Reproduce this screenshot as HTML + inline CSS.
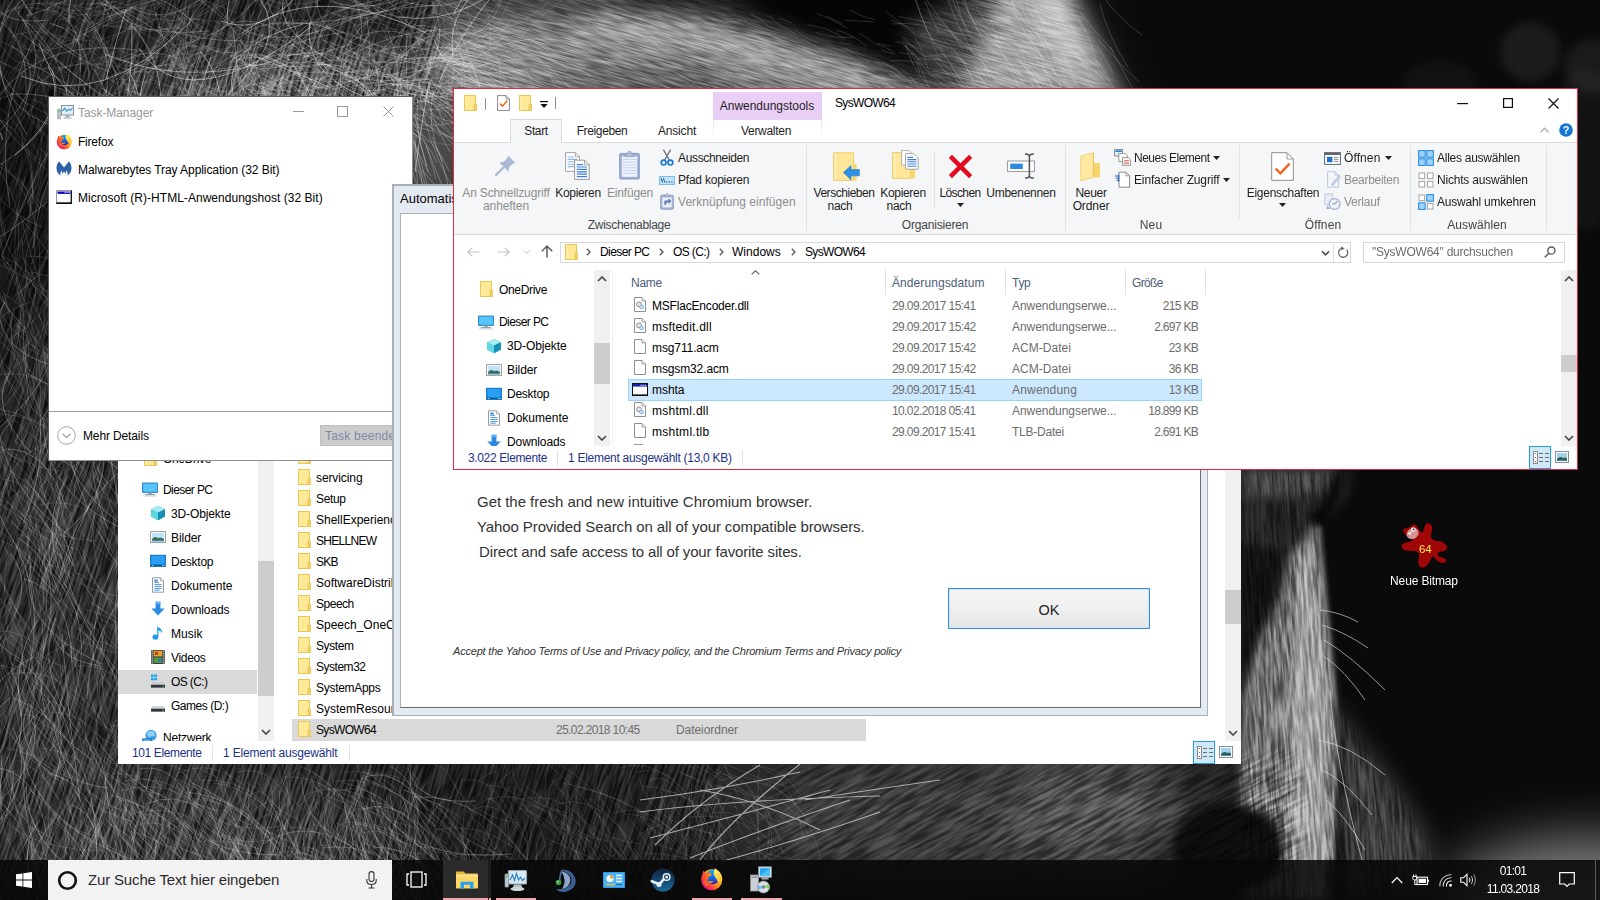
<!DOCTYPE html>
<html lang="de"><head><meta charset="utf-8"><title>Desktop</title>
<style>
*{box-sizing:border-box;margin:0;padding:0}
html,body{width:1600px;height:900px;overflow:hidden;background:#0a0a0a}
body{font-family:"Liberation Sans",sans-serif;font-size:12px;color:#000;position:relative}
.a{position:absolute}
.t{position:absolute;white-space:nowrap;line-height:16px;height:16px}
.c{position:absolute;white-space:nowrap;line-height:16px;height:16px;transform:translateX(-50%);text-align:center}
.r{position:absolute;white-space:nowrap;line-height:16px;height:16px;text-align:right}
.win{position:absolute;background:#fff;overflow:hidden}
svg{position:absolute;overflow:visible}
.rib{color:#1e1e1e;letter-spacing:.1px}
.g,.rib.g{color:#8d8d8d}
.sep{position:absolute;width:1px;background:#e2e3e4}
.hd{color:#4c607a}
.dt{color:#6d6d6d}
.st{color:#1e3287;letter-spacing:-.3px}
</style></head><body>
<svg class="a" style="left:0;top:0" width="1600" height="900" viewBox="0 0 1600 900">
<defs>
<filter id="b40" x="-20%" y="-20%" width="140%" height="140%" color-interpolation-filters="sRGB"><feGaussianBlur stdDeviation="26"/></filter>
<filter id="b15" x="-20%" y="-20%" width="140%" height="140%" color-interpolation-filters="sRGB"><feGaussianBlur stdDeviation="11"/></filter>
<filter id="b6" x="-20%" y="-20%" width="140%" height="140%" color-interpolation-filters="sRGB"><feGaussianBlur stdDeviation="5"/></filter>
<filter id="b3" x="-20%" y="-20%" width="140%" height="140%" color-interpolation-filters="sRGB"><feGaussianBlur stdDeviation="2.5"/></filter>
<filter id="b2" x="-20%" y="-20%" width="140%" height="140%" color-interpolation-filters="sRGB"><feGaussianBlur stdDeviation="0.7"/></filter>
<filter id="furA" x="0" y="0" width="100%" height="100%" color-interpolation-filters="sRGB"><feTurbulence type="fractalNoise" baseFrequency="0.04 0.7" numOctaves="2" seed="4"/><feColorMatrix type="matrix" values="2.6 0 0 0 -.8  2.6 0 0 0 -.8  2.6 0 0 0 -.8  0 0 0 0 1"/></filter>
<filter id="furB" x="0" y="0" width="100%" height="100%" color-interpolation-filters="sRGB"><feTurbulence type="fractalNoise" baseFrequency="0.4 0.03" numOctaves="3" seed="9"/><feColorMatrix type="matrix" values="2.6 0 0 0 -.8  2.6 0 0 0 -.8  2.6 0 0 0 -.8  0 0 0 0 1"/></filter>
<filter id="furC" x="0" y="0" width="100%" height="100%" color-interpolation-filters="sRGB"><feTurbulence type="fractalNoise" baseFrequency="0.03 0.3" numOctaves="3" seed="2"/><feColorMatrix type="matrix" values="2.6 0 0 0 -.8  2.6 0 0 0 -.8  2.6 0 0 0 -.8  0 0 0 0 1"/></filter>
<mask id="mTop"><path d="M440 -40H1060L1112 120H440Z" fill="#fff" filter="url(#b15)"/></mask>
<mask id="mMuz"><path d="M1241 470H1350L1318 525L1334 700L1425 830L1440 900H1241Z" fill="#fff" filter="url(#b6)"/></mask>
<mask id="mLeft"><path d="M-20 -20H440V105H128V755H720V880H-20Z" fill="#fff" filter="url(#b6)"/></mask>
<mask id="mBot"><path d="M780 760H1300V870H740Z" fill="#fff" filter="url(#b15)"/></mask>
</defs>
<rect width="1600" height="900" fill="#0a0a0a"/>
<g filter="url(#b40)">
<path d="M-60 -60H1060L1120 95L1200 300L1235 470L1245 560L1260 900H-60Z" fill="#242424"/>
<ellipse cx="300" cy="95" rx="170" ry="40" fill="#555"/>
<ellipse cx="10" cy="190" rx="70" ry="150" fill="#141414"/>
<ellipse cx="60" cy="620" rx="90" ry="200" fill="#2c2c2c"/>
<ellipse cx="170" cy="830" rx="200" ry="70" fill="#333"/>
<ellipse cx="520" cy="830" rx="150" ry="60" fill="#1c1c1c"/>
<ellipse cx="920" cy="820" rx="170" ry="70" fill="#3c3c3c"/>
<ellipse cx="1090" cy="810" rx="90" ry="60" fill="#505050"/>
<ellipse cx="1590" cy="905" rx="150" ry="68" fill="#7c7c7c"/>
</g>
<g filter="url(#b15)">
<path d="M430 40L560 5L700 18L830 52L960 100H430Z" fill="#858585"/><path d="M590 12L720 22L850 55L950 88L930 104L820 78L700 48L590 38Z" fill="#a6a6a6"/>
<path d="M560 70L700 62L760 100H560Z" fill="#666"/>
<path d="M700 -30H1005L996 36L972 92L935 92L862 62L780 30Z" fill="#040404"/>
<path d="M905 30L1000 -25L1010 104H945Z" fill="#454545"/>
<path d="M420 -25H640L600 14L430 30Z" fill="#484848"/>
<path d="M955 104L1004 -20H1065L1125 104Z" fill="#a4a4a4"/>
<path d="M1022 -20H1062L1104 70L1050 50Z" fill="#c4c4c4"/>
<ellipse cx="432" cy="140" rx="38" ry="65" fill="#4a4a4a"/>
<path d="M1328 700L1380 765L1425 830L1440 900H1328Z" fill="#3c3c3c"/>
</g>
<g filter="url(#b6)">
<path d="M1315 522L1334 700L1330 900H1241V700L1259 640L1279 597L1288 558Z" fill="#727272"/>
<path d="M1315 526L1333 700L1327 900H1292L1288 700L1296 600L1301 560Z" fill="#a0a0a0"/>
<path d="M1241 470H1352L1348 497L1330 515L1312 524L1290 550H1241Z" fill="#242424"/><path d="M1241 468H1338L1325 492L1241 500Z" fill="#444"/>
<path d="M1338 476Q1334 505 1314 519" fill="none" stroke="#040404" stroke-width="11" stroke-linecap="round"/>
<path d="M1241 545L1290 548L1276 600L1252 650L1241 680Z" fill="#121212"/>
<ellipse cx="1228" cy="848" rx="56" ry="44" fill="#0c0c0c"/>
<path d="M1337 700L1345 900H1335Z" fill="#0a0a0a"/>
</g>
<path d="M1318 526L1334 700L1332 860" fill="none" stroke="#c8c8c8" stroke-width="3" filter="url(#b3)" opacity=".7"/>
<g style="mix-blend-mode:overlay" opacity=".3" mask="url(#mTop)"><rect x="380" y="-120" width="820" height="300" filter="url(#furA)" transform="rotate(16 780 40)"/></g>
<g style="mix-blend-mode:overlay" opacity=".4" mask="url(#mMuz)"><rect x="1200" y="440" width="280" height="460" filter="url(#furB)" transform="rotate(-4 1300 650)"/></g>
<g style="mix-blend-mode:overlay" opacity=".38" mask="url(#mBot)"><rect x="600" y="560" width="840" height="500" filter="url(#furC)" transform="rotate(-28 1000 810)"/></g>
<g style="mix-blend-mode:overlay" opacity=".6" mask="url(#mLeft)"><rect x="-200" y="-200" width="1100" height="1300" filter="url(#furB)" transform="rotate(18 300 450)"/></g>
<g filter="url(#b2)">
<path d="M202 47q-18 57 -34 116M268 2q17 69 120 75M26 16q80 -21 120 -114M1 98q-47 55 -58 133M57 -18q33 -6 55 39M99 -16q16 57 108 47M234 57q67 29 127 73M116 100q-73 42 -83 148M134 8q29 18 68 -10M176 82q44 81 182 31M-20 5q-60 5 -29 118M175 -11q76 26 96 129M23 20q44 66 -63 145M101 -8q-10 -81 107 -124M254 34q13 -77 140 -67M295 -6q42 -14 84 24M456 76q58 -65 174 -16M173 83q-23 29 41 60M84 11q34 39 19 101M16 -9q23 40 65 65M162 34q-34 51 -47 113M405 2q86 23 151 -95M102 3q81 43 53 174M446 86q56 -10 76 86M-1 96q45 -61 145 -45M384 52q37 18 82 -10M14 7q46 72 130 111M117 90q17 -26 57 -25M198 -13q51 -16 95 -51M44 23q-52 78 -34 184M319 50q-9 -31 53 -37M426 64q-22 23 -25 58M216 68q39 -87 190 -9M248 68q-53 58 -32 152M369 90q34 66 149 9M407 30q-5 86 23 171M286 26q66 -21 99 98M293 99q11 77 -22 153M340 50q62 -57 159 56M348 -16q61 9 82 91M322 40q87 22 114 139M-14 16q42 10 40 76M424 59q87 -10 166 59M306 4q15 81 157 50M411 26q50 -8 72 71M223 80q-72 26 -7 152M116 0q45 -18 89 35M183 55q9 50 88 49M461 34q32 5 44 -47M0 65q3 50 74 68M-11 -4q10 30 59 24M96 -3q36 -61 88 -111M289 59q-36 85 15 184M78 37q26 -16 54 -29M330 1q50 17 103 -20M235 54q-27 48 27 108M424 -10q47 61 -47 146M202 55q-22 50 -26 106M411 76q-41 44 -41 113M80 67q-36 62 7 143M85 88q-50 79 -83 167M367 18q13 85 -41 166M21 33q64 48 124 101M-6 77q-10 -81 109 -123M144 75q34 -21 65 -45M335 81q42 81 80 165M445 -10q40 -50 121 -44M337 57q62 58 140 95M133 26q58 66 -7 177M397 96q66 -12 111 76M243 40q-15 28 42 48M233 28q8 66 13 132M319 -12q-15 55 91 68M432 12q37 10 69 33M380 88q48 -17 91 44M283 91q-25 -77 129 -96M75 7q38 34 45 91M284 -7q11 36 24 72M103 4q56 17 95 68M183 44q42 -9 74 -45M293 44q-58 39 -8 139M94 69q46 76 13 177M134 91q76 57 177 -67M46 9q46 9 31 89M388 31q14 35 10 76M316 -18q59 45 136 -60M455 -6q68 41 136 82M316 3q-16 -33 50 -54M250 42q39 -3 58 53M80 81q48 76 -85 159M10 94q80 -4 147 63M209 42q40 -57 132 41M324 81q59 9 106 -55M179 3q-14 -62 109 -64M418 76q6 86 68 158M178 52q22 91 161 96M107 89q-41 69 44 155M179 88q-56 50 -22 149M355 29q24 25 24 65M210 -19q66 27 143 10M94 93q6 52 52 90M259 44q81 49 187 33M324 71q-22 23 -28 56M342 11q28 -18 65 14M164 -8q88 -11 172 -46M229 96q43 84 140 127M377 -11q74 -27 107 117M436 -1q37 17 74 35M279 -13q-23 52 -40 108M273 24q73 1 144 -22M119 66q22 -22 61 -7M1 -1q-39 39 27 107M347 -14q53 74 -86 161M424 32q91 -20 168 82M236 92q-47 38 41 114M380 52q49 -51 109 -89M80 -14q34 17 62 44M307 35q62 -28 132 -30M361 44q-83 40 -91 160M97 -6q-40 71 -30 159M156 13q15 65 60 119M290 70q32 33 83 -40M429 85q2 -34 41 -54M188 55q-17 -63 98 -87M22 61q67 25 110 90M214 5q48 62 157 5M16 -6q-41 57 11 141M84 31q69 -45 161 -39M300 99q54 38 131 -3M431 31q17 32 72 8M18 -10q22 57 92 82M126 73q41 -17 61 -63M20 16q59 46 50 142M50 23q52 13 36 102M328 48q-89 21 -48 176M195 76q48 -17 101 -9M438 87q44 -31 103 -28M158 27q40 14 84 14M371 45q49 45 -1 133M352 86q31 -4 62 -10M247 48q-68 26 -59 132M11 46q33 12 10 70M341 88q-10 -71 101 -100M345 58q41 18 85 -24M236 72q8 51 102 20M309 39q29 71 123 92M428 29q-57 46 3 147M375 80q-47 79 -32 182M237 65q17 55 11 114M52 69q20 51 -52 96" fill="none" stroke="#fff" stroke-width="0.6" opacity="0.42"/>
<path d="M82 33q23 -75 155 -20M134 -6q67 10 74 113M11 37q69 -30 106 106M34 3q37 8 71 -27M277 8q10 -39 72 -36M359 19q57 41 109 87M110 91q-16 41 -22 85M459 40q19 20 52 -19M381 28q53 1 87 61M475 62q24 -9 49 -15M166 80q56 17 43 108M58 20q71 -14 142 -34M298 104q24 -49 106 -23M365 -20q-51 50 5 143M21 14q12 28 22 57M214 99q69 20 101 103M375 32q-27 13 -16 58M84 48q3 33 55 38M136 19q26 -33 58 -60M338 25q21 23 27 55M211 101q58 18 1 122M169 69q51 -22 107 -33M-15 104q-7 36 8 72M125 27q40 9 66 50M176 63q34 13 70 -17M145 98q62 18 97 86M393 -8q30 -4 50 -34M334 2q64 31 139 31M25 8q22 -23 54 -33M16 95q41 33 102 31M363 83q43 -3 85 14M-12 30q-26 75 64 144M310 56q7 -43 47 -72M305 -7q33 41 105 15M393 56q59 32 115 -70M254 24q15 29 57 33M473 45q65 28 51 132M452 58q14 -26 54 -24M268 67q71 -28 152 -2M212 -4q-32 3 -28 59M252 50q-8 39 60 52M476 82q-4 32 42 47M124 92q48 30 108 -32M73 48q-2 -27 37 -39M474 97q4 42 44 71M349 28q62 -30 95 100M80 39q42 -19 76 -52M67 45q45 -34 110 -24M301 -15q-21 26 32 58M280 39q44 40 115 29M359 74q17 78 141 73M408 31q11 55 107 35M243 46q74 -12 142 46M7 71q-29 58 -27 128M356 18q28 -5 39 42M203 43q21 18 55 11M243 10q34 -33 93 -8M14 94q-60 12 -50 113M191 81q65 -12 124 -45M432 -8q1 32 8 63M455 -20q31 -28 80 -23M11 92q20 43 5 94M273 -14q9 -74 87 -121M229 97q16 49 -45 92M128 95q-31 17 -14 70M157 39q52 52 128 -71M81 59q-3 -73 132 -63M33 71q46 58 149 -10M337 -3q42 64 64 139M19 8q41 -49 128 -11M71 9q52 45 69 118M311 91q36 11 52 54M443 63q19 -57 119 -21M472 35q46 -29 89 62M280 16q16 -67 134 -35M123 74q40 -6 78 -22M73 92q-10 25 -25 48M355 28q27 45 -31 100M258 61q42 45 122 10M238 43q-6 62 -5 125M456 2q-4 34 11 67M98 35q-37 58 26 134M98 41q53 -20 107 -39M-2 55q-32 47 41 105M70 -1q21 -48 57 -87M201 13q-24 17 6 58M264 48q33 19 10 76M136 -15q59 0 118 -7M112 54q-4 -70 101 -98M107 -0q-21 68 61 127M11 31q9 36 73 7M1 41q72 32 36 154M208 73q38 3 46 -61M51 29q17 -45 96 -11M-3 105q52 39 29 128M107 49q34 37 97 -29M162 22q39 44 -53 105M182 61q41 -15 57 -67M412 54q6 50 -17 99M402 28q20 31 12 73M72 49q11 -35 62 -37M214 19q54 58 149 56M411 6q23 18 57 9M161 14q-1 -35 38 -58M176 95q27 30 29 74M57 97q53 41 134 11M434 -17q20 -42 92 -3M421 21q52 12 21 105M177 10q26 -21 40 -53M-4 19q43 -34 105 31M333 13q59 19 41 116M82 15q30 37 35 88M413 8q28 -34 87 -11M0 -17q-9 55 67 90M468 17q72 24 74 132M325 63q22 69 -54 135M296 -9q31 -35 89 27M172 21q38 -15 70 40M181 39q22 -57 107 -62M27 23q29 16 64 18M331 49q17 20 21 48M162 -12q27 6 55 12M273 39q12 -37 78 -2M154 91q15 36 59 53M73 39q67 39 98 120M268 98q-7 59 23 117M185 32q49 51 139 -25M171 94q20 -26 39 -52M134 25q11 31 -29 60M94 65q25 -5 48 -15M177 10q49 36 106 59M292 50q33 71 1 157M153 91q58 28 129 -8M323 100q-10 32 2 68M225 50q29 28 81 9M247 10q19 -38 83 -22M237 -4q-9 -27 38 -43M332 -6q64 21 126 49M61 88q14 24 -6 56M234 80q58 -29 127 24M338 21q42 52 134 0M394 51q53 36 123 35M396 80q45 -10 73 -56M96 3q57 8 61 -97M465 -3q6 48 42 86M178 97q-24 14 -26 49M39 -15q28 59 129 -19M40 21q29 -46 63 -90M167 19q44 56 15 141M176 57q38 69 33 154M327 48q27 19 7 66M34 97q17 -49 100 -26M142 -18q16 29 49 44M117 8q45 -7 81 41M6 -12q33 26 -16 83M71 40q-36 4 -36 63M222 32q44 16 8 93M255 62q-19 36 49 64M412 104q42 57 133 48M68 -17q-2 -31 55 -31M159 74q12 -52 106 -8M85 100q53 -11 57 -92M376 72q34 60 135 28M364 103q43 -64 115 -103M333 11q-11 24 -12 51M94 29q37 49 121 14M162 60q18 36 81 5M141 -8q48 -45 132 1M352 48q35 2 32 62M51 24q24 8 49 15M182 20q77 -10 124 92M420 20q-26 16 15 60M195 100q47 8 89 -33M69 14q63 45 73 136M72 25q-25 22 -31 58M169 60q48 35 109 -44M408 59q50 -25 97 58M399 66q61 10 115 45M172 9q36 44 75 84M-4 58q47 33 108 40M446 -1q40 69 145 66M136 72q-47 6 -44 83M43 104q7 37 67 36M305 97q-1 69 2 138M477 -12q33 55 -15 127M384 37q72 -11 117 86M120 60q55 -4 76 -81M225 10q-41 59 15 143M255 93q15 30 8 66M30 -15q45 57 145 6M39 3q64 33 141 25M431 -11q-27 25 -34 64M418 71q51 -35 112 -51M-12 22q48 -35 119 -7M282 67q32 1 57 -30M213 -4q71 -30 119 -97M159 5q-57 27 -61 110M160 19q28 18 64 15M192 83q49 13 97 24M451 23q8 37 30 70M122 89q69 22 142 -21M207 97q60 28 130 22M204 -12q40 5 78 22M457 17q55 28 52 112M186 -3q0 39 -15 76M151 83q-10 57 -6 115M30 92q21 -40 65 -63M342 64q27 69 149 5M-8 59q42 15 82 37M138 64q-39 68 103 118M476 29q-30 53 2 121M479 -12q32 34 87 37M89 104q11 -44 84 -34M177 73q32 -13 48 -48M292 73q65 24 135 -35M368 -5q5 25 47 21M452 92q28 -34 50 -73M247 -6q5 41 11 82M42 51q25 -17 48 -36M127 77q7 -47 92 -26M89 36q-2 50 76 65M32 86q69 -37 133 -83M183 57q10 77 -15 155M-15 -1q-32 57 6 131M58 46q3 -31 36 -51M463 60q5 27 -2 55M19 13q31 -69 116 -97M224 62q-26 73 -26 152M230 93q28 30 81 16M109 26q51 -3 98 30M195 36q-32 -64 89 -110M244 48q25 -28 73 15M166 19q16 34 67 34M224 -19q39 -68 152 36M277 100q56 -14 115 12M131 56q30 30 59 61M238 74q1 -30 38 -46M115 79q72 3 139 41M123 65q79 7 113 -111M144 20q-22 65 6 137M8 75q43 -41 74 -93M444 60q73 -24 85 -127M270 -19q-8 47 29 92M472 95q39 -56 94 -99M356 27q39 -29 92 34M140 72q31 1 43 -46M313 49q12 -29 49 -40M457 50q-2 37 -20 70M248 85q54 -49 115 -90M-4 34q19 59 123 17M227 66q45 -51 134 23M351 1q33 14 51 51M62 24q46 27 74 78M267 85q57 2 114 9M470 21q33 19 31 69M345 52q23 16 55 -14M169 70q53 27 112 36M468 94q49 -16 96 39M357 -7q20 -69 143 -12M329 51q42 -9 67 55M455 76q-18 24 5 61M89 5q55 -20 94 69M362 53q-49 58 -31 148M162 99q-22 35 29 77M343 13q26 -4 50 -14M107 17q31 -9 62 -16M116 16q37 38 104 -18M60 87q-11 58 -8 117M347 47q-13 74 78 129M110 -13q-39 22 -29 85M97 37q19 62 129 15M233 51q13 35 75 4M35 98q-14 26 30 49M31 51q31 -73 124 -99M416 -12q28 -5 29 50M265 103q-20 69 65 129M241 -10q27 22 58 40M157 42q51 -38 116 -53M223 -10q-8 55 99 52M261 -3q40 18 86 -9M449 102q-73 20 -54 142M447 -17q32 48 101 54M286 57q-11 28 -18 57M460 -16q64 34 112 -93M-8 -16q-3 63 1 126M270 75q23 9 4 50M377 102q20 43 -0 95M153 -18q-1 39 16 77M243 22q46 19 48 88M421 2q31 -23 65 -42M372 22q37 -49 117 -36M241 12q19 30 -10 70M131 21q-25 57 41 117M250 -10q31 22 17 75M187 104q17 41 89 10M475 28q68 8 111 -80M149 79q38 15 81 12M351 39q1 26 2 51M170 -12q16 29 -17 64M419 100q-43 6 -27 83" fill="none" stroke="#fff" stroke-width="0.6" opacity="0.22"/>
<path d="M48 66q24 41 -33 89M306 86q42 87 64 183M159 -6q33 -90 189 -36M69 22q-5 -55 69 -86M39 43q21 69 114 87M233 94q-12 -48 70 -70M129 71q34 58 -38 130M139 48q46 73 172 -21M201 52q42 50 -5 130M433 97q30 -79 96 -140M5 -0q30 -77 145 -80M-11 6q-17 65 14 134M203 2q-28 -47 59 -92M105 54q60 26 131 15M132 23q3 73 -23 144M239 35q76 -57 189 -1M429 82q-8 45 -14 90M453 15q34 -75 143 -80M260 -1q31 44 -38 100M310 22q-10 67 102 88M227 25q-2 -67 68 -116M256 56q38 16 75 32M211 57q-15 51 -44 97M21 76q82 35 169 -54M102 88q49 39 108 64M434 39q15 52 96 49M221 21q46 18 89 -41M366 97q-66 44 -41 154M322 77q-28 37 9 92M126 9q-11 35 -20 70M145 75q-31 89 121 144M289 -12q-25 34 42 73M398 17q79 12 143 -72M453 55q-12 -81 131 -100M397 72q-1 92 28 181M433 57q59 9 105 57" fill="none" stroke="#fff" stroke-width="0.7" opacity="0.65"/>
<path d="M235 62q12 18 32 30M401 86q24 0 46 18M271 84q41 14 71 50M434 96q42 11 87 5M442 90q23 4 46 5M337 57q21 23 41 47M394 66q29 -15 65 -5M302 58q25 -6 49 -14M439 84q27 -5 53 12M334 98q28 3 55 -10M398 80q16 40 74 45M285 79q26 16 31 53M399 58q28 -15 62 -9M388 88q36 12 76 7M385 76q18 4 35 9M440 95q14 -10 33 -9M383 75q28 -1 55 -9M394 73q26 24 60 38M240 87q16 -3 33 -6M234 58q26 -12 57 11M440 93q33 1 62 21M446 60q17 13 43 3M342 73q41 -7 81 17M404 87q26 5 50 14M330 69q27 6 47 27M400 75q40 10 79 25M313 95q25 29 41 65M378 88q26 26 73 5M374 85q34 -6 67 18M399 79q5 25 26 43M234 74q14 18 34 30M279 73q-3 21 21 36M243 81q33 23 56 57M360 87q25 28 57 49M285 87q11 29 57 26M260 90q25 27 73 8M290 81q30 -4 55 23M368 95q11 21 40 26M322 62q25 15 51 27M448 81q4 25 28 43M247 69q15 32 58 41M314 67q26 -18 62 9M312 85q22 11 48 -7M435 66q13 -13 37 -4M405 88q28 10 59 1M236 92q8 20 28 32M384 70q14 16 28 33M299 75q18 26 45 45M447 65q28 -19 67 -3M442 70q20 20 54 15M431 85q25 6 51 -6M278 95q17 13 28 33M280 87q20 -30 69 -20M415 79q17 -5 32 16M308 99q40 -9 72 38M252 56q20 5 33 24M377 86q28 -7 58 6M353 71q22 -4 44 7M287 56q31 -9 65 6M255 93q30 0 58 18M425 89q24 26 60 35M340 74q30 4 59 12M346 79q40 13 61 57M235 69q39 -4 74 -23M293 64q16 37 52 61M382 89q25 10 52 15M424 100q39 10 48 64M284 99q30 3 56 24M420 78q-4 17 18 30M233 62q31 -14 67 13M354 97q35 15 73 19M358 63q35 23 80 25M278 75q22 13 46 20M369 56q30 -17 69 -3M246 89q43 9 87 10M252 84q37 14 79 1M397 58q25 -30 74 -23M274 56q24 17 58 -7M301 67q11 18 28 30M365 97q28 -15 61 -18M411 66q16 12 33 25M443 66q40 13 85 3M244 63q20 12 47 -1M384 99q31 13 56 37M388 77q27 -13 57 -16M347 57q39 -22 85 -27M303 62q42 -1 75 39M340 77q31 10 48 42M272 88q23 -34 80 -19M272 76q11 32 45 50M397 88q27 -30 76 -22M266 57q36 -20 79 -25M249 57q2 33 44 49M238 60q17 -11 41 2M274 84q20 -1 40 -5M313 62q29 8 55 26M334 57q20 5 36 20M232 95q23 14 48 24M437 61q36 -1 71 13M385 96q19 -14 45 -14M395 90q42 5 69 50M317 93q2 18 28 24M393 94q21 26 66 10M428 81q6 45 56 70M374 98q27 -1 54 -8M259 90q28 -20 65 -18M301 82q25 13 57 -5M447 67q34 -12 71 12M417 64q23 -9 46 21M230 55q15 18 46 5M370 58q18 13 35 27M389 94q22 17 32 45M317 69q16 24 45 37M263 90q8 20 23 36M266 57q17 12 40 9M356 85q16 6 18 28M238 76q23 27 49 51M418 72q20 -28 67 -13M280 56q17 -1 34 -4M258 82q25 5 35 36M378 88q17 27 40 49M420 85q3 23 25 40M369 76q22 -19 55 -19M362 78q16 -4 31 12M364 86q30 25 40 67M330 78q3 27 38 37M336 73q11 23 49 16M240 73q25 -25 69 -17M263 74q35 15 67 36M295 72q21 2 27 33" fill="none" stroke="#fff" stroke-width="0.6" opacity="0.42"/>
<path d="M899 52q7 3 16 2M827 16q8 4 16 8M751 14q10 4 17 12M844 20q15 1 30 2M907 80q6 1 13 2M679 36q7 6 15 10M469 91q13 7 24 17M814 90q6 3 11 7M504 58q16 8 29 21M723 38q16 5 33 5M608 47q15 7 29 15M493 18q17 2 35 5M772 42q7 4 16 4M751 21q12 7 26 13M838 64q17 10 33 22M774 43q10 4 21 6M617 41q13 11 29 18M877 44q9 3 17 8M483 80q9 5 17 12M492 23q18 3 34 16M565 77q18 2 36 6M681 28q12 1 23 5M816 13q16 6 31 15M532 21q17 2 34 3M438 50q10 1 19 8M653 41q7 9 18 13M890 61q17 -2 34 4M725 19q12 -1 23 2M956 61q14 13 32 22M772 52q15 5 27 15M711 46q14 7 30 11M732 79q7 2 12 8M455 24q9 6 17 12M677 60q17 2 33 7M878 81q13 -3 27 1M898 16q16 4 33 7M783 46q8 3 17 6M566 69q8 -1 16 2M712 61q19 5 40 1M631 24q18 7 33 21M831 82q8 3 14 10M517 30q16 10 31 21M498 41q14 5 30 6M841 48q12 3 24 8M671 70q9 5 19 10M507 14q11 -0 21 6M472 47q17 6 29 21M598 42q8 2 15 4M875 44q7 -1 15 2M836 30q17 4 30 16M530 38q15 6 28 16M670 41q17 3 32 11M860 91q15 12 36 16M521 97q17 -1 34 6M590 49q14 6 26 17M906 86q7 2 13 5M585 47q10 10 23 17M468 32q10 3 19 10M463 14q13 3 26 8M729 36q15 -1 31 1M690 43q7 1 13 3M588 20q12 -3 25 1M896 42q13 0 25 8M484 79q12 4 24 10M828 54q13 12 30 18M815 69q13 5 26 9M708 82q5 4 11 7M757 63q6 4 11 8M629 93q14 -1 27 4M830 53q8 7 18 10M434 30q14 11 32 17M576 17q16 3 29 15M925 56q13 -1 25 1M485 88q6 4 13 9M575 69q11 1 21 2M681 48q15 12 35 15M911 83q9 1 19 3M771 63q20 3 38 10M440 18q15 6 32 5M452 31q15 7 33 6M570 19q14 14 31 23M680 76q12 5 23 13M708 68q15 0 29 7M945 29q18 8 38 7M920 84q14 10 29 19M469 74q17 5 30 19M462 74q15 11 35 12M667 69q15 6 28 14M769 16q11 11 27 18M675 28q15 5 29 10M488 10q9 1 18 5M547 47q16 10 33 17M441 86q14 8 30 13M618 40q15 -3 30 2M791 90q12 9 26 13M939 82q12 4 20 15M756 66q13 7 24 16M432 83q18 9 36 16M882 78q8 10 20 15M640 11q9 6 21 5M639 34q7 3 13 7M639 21q10 7 22 10M610 96q13 -0 27 4M438 37q8 6 17 11M708 33q7 2 13 5M581 82q13 9 27 16M889 75q8 2 16 1M875 97q7 4 14 8M761 63q19 2 39 5M572 96q6 3 13 4M568 29q14 2 28 6M782 90q11 15 29 23M564 83q14 -2 28 3M483 93q16 2 32 4M431 80q18 5 37 3M693 49q15 -4 32 2M709 91q6 4 14 7M802 39q13 6 24 14M709 34q18 2 36 8M839 42q5 3 12 2M828 96q7 1 13 5M456 64q18 6 35 16M554 29q6 1 13 2M653 42q7 8 17 12M712 19q14 4 29 2M457 72q15 6 31 6M815 32q18 7 39 5M919 58q11 3 22 1M466 36q18 -0 37 2M474 41q12 3 24 4M779 18q6 2 13 5M858 33q8 4 16 10M850 10q12 7 25 10M932 71q9 1 17 3M579 59q16 1 31 3M456 21q12 13 29 21M637 97q15 6 32 5M541 10q7 2 14 2M751 52q15 -2 30 3M501 62q14 10 31 15M503 37q13 -2 26 3M890 70q9 9 22 13M872 83q8 4 15 9M460 77q19 4 37 13M658 86q11 13 27 20M920 34q6 3 13 6M935 55q14 -2 28 4M675 17q16 7 33 10M882 50q6 3 13 4M732 46q12 -2 25 3M494 17q7 4 15 5M753 86q8 2 15 6M875 61q15 3 27 13M536 48q16 11 32 21M568 14q9 7 22 9M539 28q6 1 13 1M892 24q14 -2 28 1M756 90q8 5 17 10M583 77q17 5 36 7M903 40q12 7 23 17M773 37q6 1 13 1M558 19q6 5 14 8M575 42q12 13 29 20M950 63q12 9 24 17M602 43q8 4 17 7M888 73q6 1 13 2M660 84q12 6 25 10M723 70q13 3 25 10M495 49q17 9 32 21M735 56q7 4 16 5M475 30q9 0 17 4M472 56q15 3 30 4M761 52q9 4 19 8M795 29q10 10 25 14M757 58q9 4 17 10M659 75q6 6 15 8M951 54q12 8 23 18M476 12q14 7 30 13M845 48q12 8 25 14M721 69q6 3 13 5M803 48q11 5 20 15M701 42q18 -1 37 5M808 25q20 2 37 14M885 11q15 11 30 23M768 50q11 1 22 3M891 20q12 5 23 9M850 63q19 6 38 9M574 58q5 4 11 7M688 35q9 1 18 2M654 63q14 3 29 6M852 81q19 4 39 7M608 32q10 7 21 11M566 86q18 3 36 7M643 61q13 5 26 10M933 75q19 -4 39 4M458 82q6 0 13 3M692 84q8 -2 17 1M458 38q18 8 37 13M883 62q14 7 25 18M627 52q19 2 38 4" fill="none" stroke="#fff" stroke-width="0.7" opacity="0.22"/>
<path d="M415 114q4 29 13 58M410 87q17 34 46 60M416 136q-6 46 34 86M422 170q27 27 34 68M409 131q19 9 28 32M432 82q29 37 53 77M412 135q6 41 8 83M432 137q21 43 19 93M444 71q32 20 48 58M433 91q-7 35 9 70M452 110q13 35 18 72M411 132q14 42 12 87M431 99q40 25 46 82M429 116q37 27 58 71M425 87q6 34 25 65M426 146q9 22 18 44M418 93q-4 37 9 73M413 129q24 13 36 42M406 160q19 27 7 65M442 133q43 18 64 68M417 146q7 27 14 55M445 126q20 17 22 48" fill="none" stroke="#fff" stroke-width="0.7" opacity="0.4"/>
<path d="M939 45q11 20 24 39M1018 58q19 25 38 50M1085 94q10 28 26 54M1016 16q22 16 39 38M1029 48q15 17 23 38M964 63q10 17 16 36M994 35q11 27 31 50M1070 66q9 21 17 42M1037 23q9 20 19 39M1009 28q14 12 28 25M1100 4q8 33 28 63M959 -8q7 12 12 26M1097 61q19 25 27 56M1006 -0q11 21 29 37M961 60q16 9 26 26M1022 52q5 21 21 38M1052 50q9 14 14 30M1016 53q17 22 21 51M1098 39q19 23 41 43M1079 48q16 17 31 34M974 51q15 10 26 26M906 45q5 21 20 38M1028 59q24 23 43 49M1077 16q15 23 21 52M1054 6q15 15 26 33M976 7q7 13 18 23M974 65q14 31 41 55M1048 78q15 30 27 61M1025 -3q11 16 25 31M902 69q16 15 32 30M1077 56q22 16 39 39M1030 33q11 20 17 42M965 91q11 14 23 28M1041 89q13 15 29 27M1004 63q10 10 15 25M937 22q16 10 26 27M905 45q11 12 15 28M1053 -2q19 14 33 33M1065 43q16 13 24 35M1072 31q7 13 13 27M1013 6q18 28 49 46M1110 47q13 23 25 46M936 57q22 17 33 45M962 2q13 19 22 41M1064 45q18 11 28 32M913 -6q11 30 24 60M1098 47q8 13 15 26M1028 33q9 18 21 35M944 41q19 15 29 39M951 65q11 21 32 33M1028 67q18 29 32 61M983 69q19 13 34 31M1017 67q8 23 20 43M917 59q10 24 21 49M1007 33q9 14 24 24M1008 -6q14 28 33 53M938 90q17 17 33 34M935 18q14 8 23 23M1036 60q24 24 45 50M996 87q9 21 24 39M1055 22q18 23 42 39M1026 2q5 16 16 29M1031 57q13 16 30 28M923 -6q17 27 39 50M948 -1q10 30 27 57M943 69q13 9 25 22M1101 -6q17 24 41 41M956 -2q7 34 29 62M1019 -1q8 26 26 48M1059 43q9 21 17 43M1034 73q22 26 36 57M1088 82q8 11 17 20M1030 91q12 26 32 48M935 60q12 12 21 28M976 67q15 13 22 33M1065 69q20 23 26 54M959 39q24 20 40 47M903 37q9 9 19 18M1027 47q18 17 37 34M964 13q18 15 33 33M1023 61q20 17 35 39M1057 11q11 27 31 49M1011 86q13 27 22 56M956 56q14 8 23 23M1037 31q12 28 24 56M972 24q9 12 22 20M963 -9q4 21 15 39M995 92q15 17 34 32M905 86q22 16 35 43M916 -1q7 33 31 60M1011 -0q7 23 22 43M1033 49q13 8 22 23M991 20q3 13 10 25M925 1q6 16 14 32M1023 32q8 13 20 24M978 53q7 12 12 26M974 88q9 14 18 29M903 44q11 11 23 21M1013 12q8 18 21 33M911 78q11 12 19 26M1032 -0q8 16 14 32M915 38q9 14 13 31M1015 57q12 13 25 25M950 -7q10 30 32 56M1080 12q15 21 34 40M1031 48q15 10 24 26M912 51q17 28 47 44M931 91q7 10 13 22M976 22q16 8 26 24M994 41q16 29 45 49" fill="none" stroke="#fff" stroke-width="0.7" opacity="0.25"/>
<path d="M52 712q-4 70 66 124M31 665q22 28 34 62M-4 648q2 55 67 87M67 795q-36 56 -12 133M80 802q1 65 15 128M57 820q20 31 40 61M25 645q15 20 2 50M70 400q36 39 -2 106M80 845q39 48 97 77M69 484q-40 74 42 163M43 721q-62 40 -0 147M-10 258q-12 73 94 115M13 469q-34 59 -47 128M110 806q80 20 130 103M69 675q-10 42 48 72M95 847q26 57 98 78M119 654q30 9 35 51M18 534q33 7 35 58M79 722q-6 56 84 73M32 507q-22 15 -12 51M92 662q-20 51 53 95M-11 158q56 60 7 164M7 449q-29 51 -22 116M-12 248q55 40 17 136M-7 337q39 22 35 83M-9 592q-61 18 -55 113M-2 569q21 73 69 135M69 799q-11 31 -29 60M-8 526q56 37 86 103M-19 779q30 28 62 54M-12 690q-10 30 -5 64M-1 503q35 23 66 52M59 599q-5 45 -36 83M10 663q33 18 34 67M41 739q30 68 52 138M64 292q65 23 54 126M46 290q42 17 50 75M64 126q39 10 51 64M101 624q9 32 -22 62M25 487q-62 42 -39 145M-17 116q51 3 50 88M31 193q1 38 -24 71M5 748q51 7 79 66M16 861q15 68 -10 138M122 838q31 22 4 77M59 470q-69 50 -51 162M15 853q17 21 5 54M119 708q48 43 -15 129M116 324q-8 57 -19 113M56 802q-40 28 -25 94M5 364q19 21 29 48M-20 841q32 43 -25 105M18 690q20 23 34 51M64 192q-2 58 51 105M39 858q70 6 84 112M113 515q1 74 103 106M-1 774q-40 23 -41 83M84 531q-8 43 37 79M93 823q30 51 96 70M12 111q-51 51 -50 135M28 432q-19 24 -14 60M83 451q-59 22 -55 113M8 409q4 55 61 91M124 796q-58 61 -48 160M87 165q51 20 43 100M111 382q17 25 37 47M29 825q34 38 5 101M-13 625q4 55 9 109M40 793q14 36 64 45M26 350q-6 42 31 80M-6 523q-23 39 -7 91M31 574q31 32 68 56M69 452q15 55 96 63M19 255q30 25 6 78M-9 576q-35 62 -47 135M107 748q-15 45 56 78M117 588q35 29 5 91M28 273q-13 63 7 128M112 96q26 17 41 46M112 455q3 36 -15 70M96 321q-24 56 -12 121M-16 372q-3 47 -46 83M125 549q-16 52 -5 108M37 307q8 38 43 64M-7 185q-26 80 42 164M77 666q55 -6 74 83M55 120q30 12 49 42M49 263q1 32 52 39M123 799q3 37 55 50M-18 210q-61 56 5 166M102 340q-64 50 -17 162M121 682q-2 67 -25 132M63 811q7 26 8 52M106 641q-18 79 46 155M13 635q-24 9 -16 48M43 748q44 7 76 46M12 601q-55 33 -26 125M-3 316q-4 72 59 133M124 767q-28 63 29 136M55 618q29 69 -43 143M-16 639q-29 22 -17 71M90 222q34 55 93 89M3 794q-14 74 98 114M-2 635q23 76 29 157M40 275q-40 20 -25 85M-15 779q8 68 116 72M27 550q-8 28 22 53M52 712q35 1 58 38M98 113q45 16 81 51M103 756q57 40 86 109M91 603q47 25 86 63M47 523q-4 49 -4 98M100 619q31 12 45 49M118 393q-55 62 -54 157M33 669q21 79 42 159M72 622q-3 36 4 71M42 619q3 37 -13 74M17 835q-32 41 28 100M93 756q16 28 17 63M-8 403q-31 44 36 101M57 223q44 49 91 95M39 475q14 64 52 121M-13 477q40 45 73 95M90 838q-8 62 -15 123M-4 657q26 40 64 71M18 760q76 34 31 164M47 344q-2 64 18 126M116 434q24 66 63 125M19 805q17 24 38 45M112 753q-16 60 -29 120M22 222q18 73 52 141M122 711q21 57 23 119M112 736q32 72 110 114M32 668q24 62 50 123M71 804q-7 53 -37 101M84 609q54 13 87 69M74 224q34 21 44 67M62 760q-30 56 5 127M37 425q-17 33 2 75M114 773q80 6 130 94M-1 570q10 34 34 63M58 508q-19 59 30 120M85 639q-27 46 -27 103M-4 158q50 43 43 124M119 318q-33 42 29 102M2 289q17 44 5 93M-1 801q45 39 41 112M116 177q-3 29 -3 58M27 827q73 20 53 141M14 855q22 16 25 49M33 501q21 38 37 78M48 236q5 59 28 116M87 444q81 8 107 123M24 416q-12 36 29 69M24 516q7 32 6 65M-1 513q-63 43 -15 152M-4 448q-37 30 0 95M52 764q25 41 78 57M101 476q-9 70 -42 135M83 493q14 78 121 102M109 276q-5 27 -9 54M24 484q32 49 50 105M90 602q33 16 42 60M27 422q-46 54 36 137M18 322q-1 25 12 49M-15 552q-36 31 12 95M25 108q15 36 61 50M87 367q7 34 -23 66M63 505q-37 24 -17 85M72 626q1 38 11 75M117 107q37 23 44 75M92 594q5 67 100 90M-11 110q0 78 16 155M53 408q-3 80 25 158M88 454q-25 67 -48 134M24 326q23 59 -60 112M55 424q-27 32 9 84M50 733q41 67 93 126M59 430q-28 52 -49 107M33 447q46 24 60 84M-9 376q63 -16 109 70M111 339q50 29 67 94M85 329q13 24 -21 51M108 625q50 39 75 102M54 307q-30 56 25 125M17 534q15 76 24 153M105 807q-25 43 39 91M64 504q-13 60 -21 121M75 297q0 26 22 46M99 662q21 67 -65 125M27 805q22 75 120 99M1 256q48 43 -13 128M57 240q36 45 -34 109M37 103q-57 54 -57 146M-20 817q7 64 76 103M61 184q68 11 85 109M35 813q4 34 27 63M31 703q-13 74 68 133M6 516q-15 29 22 61M30 566q-1 82 134 95M79 196q3 53 1 106M12 212q-43 44 -34 118M87 404q-5 43 16 85M42 699q47 7 53 80M-14 260q48 15 86 53M108 128q-28 12 -29 54M32 284q40 23 8 92M-1 618q34 78 -14 169M92 359q17 38 20 81M113 289q37 71 59 148M98 506q13 67 65 120M35 863q34 68 119 94M83 460q-13 25 -7 55M106 409q-8 66 -15 133M92 468q19 53 85 74M4 450q-22 14 -13 50M31 375q22 55 -6 119M3 419q-60 60 -58 159M81 624q11 33 -26 64M102 110q-28 40 22 96M71 268q40 36 87 62M48 543q13 45 76 54M22 240q2 81 113 117M39 349q-27 73 70 139M118 754q-25 20 -1 64M4 664q5 27 25 48M17 779q51 41 90 94M-13 312q1 71 76 121M116 223q42 23 62 72M10 674q56 -11 99 58M25 320q-12 80 51 154M42 857q13 34 44 58M92 653q38 57 34 132M118 665q-50 29 -24 112M48 827q54 62 56 154M55 527q-37 66 28 149M6 639q41 27 22 96M112 856q40 44 -11 118M27 348q44 18 75 58M40 148q55 61 122 110M14 441q49 23 50 96M88 813q-45 70 10 165M58 497q34 32 -4 94M46 724q-17 22 -1 55M-13 494q42 11 60 62M69 642q28 48 -37 104M-14 161q34 11 53 47M2 750q-5 54 50 95M6 481q7 54 90 60M62 328q3 55 6 110M72 643q-80 24 -58 157M98 621q14 34 -15 72M102 430q69 -12 118 74M19 804q70 26 102 109M95 389q-18 64 22 130M10 612q9 39 56 56M2 414q60 3 92 77M32 849q53 16 38 104M18 177q23 26 5 68M1 665q16 39 2 85M20 517q25 22 10 65M71 311q26 25 0 71M-10 755q12 23 11 51M72 263q-8 24 -13 49M63 240q13 56 -56 101M89 117q-22 72 -4 150M-17 144q15 74 -39 147M115 721q75 -22 120 100M27 256q55 -3 72 83M120 257q-35 30 -2 92M61 477q-3 59 -17 116M5 711q-42 32 6 105M47 666q23 40 66 66M17 862q-52 37 -62 111M19 690q-22 48 -32 100M75 287q29 22 59 40M72 754q25 25 41 57M4 294q58 32 36 127M5 458q-3 35 16 69M62 837q23 58 -55 113M56 304q7 29 34 48M75 307q46 71 107 131M81 284q-30 61 -57 124M-4 431q16 34 64 40M-4 253q77 32 81 145M40 505q57 -15 97 66M26 343q-6 51 -51 89M28 326q18 40 63 62M31 272q71 13 121 80M19 748q22 54 -53 103M101 682q14 40 72 44M49 231q5 37 -36 66M81 855q20 16 -3 52M11 607q-23 22 -28 57M78 118q-5 43 -32 82M95 513q-5 28 4 57M2 729q-28 57 -21 126M122 734q36 29 -7 93M125 144q-0 61 101 68M45 256q33 10 59 36M31 302q-82 24 -56 161M8 632q37 37 75 74M26 699q12 72 95 112M71 154q-4 73 111 96M15 608q43 64 -22 153M10 143q-20 42 -4 93M4 587q22 46 60 84M118 242q13 25 -10 55M81 159q22 75 -42 151M82 595q-12 53 -51 97M107 301q-9 46 -35 87M101 678q-14 63 89 94M38 525q16 66 2 136M35 231q-22 39 6 89M-14 680q11 76 110 108M32 171q-9 36 49 56M97 113q53 25 101 60M60 743q-31 12 -18 64M47 457q39 5 57 54M21 514q41 6 49 66M-10 796q46 24 37 98M123 105q7 27 -10 54M50 446q-26 53 -7 118M-10 321q38 38 62 88M-4 194q17 22 46 33M120 552q42 45 83 91M21 714q43 1 51 70M15 805q21 65 40 132M18 368q9 42 21 84M-16 393q39 37 82 70M112 767q3 52 -36 97M103 187q-5 28 25 52M88 808q27 70 103 109M59 437q-48 24 -23 104M114 378q-29 42 20 100M104 403q6 44 40 79M76 573q61 23 30 127M49 629q32 67 -15 147M114 841q47 58 11 148M7 262q38 69 33 154M115 735q-0 27 44 30M52 695q27 34 -26 82M106 812q64 11 53 118M116 566q-14 65 -62 117M6 491q-22 53 -35 109M12 208q29 32 54 68M117 304q-13 68 88 107M14 325q27 10 22 53M60 284q48 55 92 114M62 600q-70 39 -19 159M-4 665q32 2 54 34M-1 212q8 73 93 115M53 518q40 46 -15 120M47 251q66 51 51 159M27 543q10 42 1 87M52 811q59 51 129 89M113 396q14 22 1 53M74 349q9 83 39 163M77 529q65 53 102 134M-17 422q19 32 29 69M-9 820q6 42 19 82M66 395q-46 25 -23 102M91 628q-11 66 96 94M98 129q7 24 28 41M109 624q-25 52 1 115M59 710q28 46 77 74M-10 528q-23 20 -23 56M84 780q-39 50 -57 113M49 434q-22 40 9 90M59 430q-28 61 32 131M98 641q25 4 31 39M-8 485q21 49 85 64M44 767q44 31 50 96M-1 540q32 10 51 45M86 849q-9 38 51 60M64 708q-1 65 -64 112M122 782q56 61 144 84M14 460q50 51 78 120M-8 780q5 35 36 61M-1 561q-17 27 22 61M81 138q-54 34 -46 119M92 226q-2 35 37 60M117 537q-3 84 0 167M44 311q4 32 -31 57M103 116q54 17 76 84M36 115q12 27 -0 59M-5 631q58 -4 76 89M62 359q1 37 -27 68M106 142q35 42 30 104M4 479q25 4 43 28M35 294q-14 48 -7 100M66 642q-42 41 -47 107M61 154q35 45 -30 110M88 481q-19 46 -43 90M110 810q-1 52 -17 102M87 786q14 66 43 127M60 260q-14 38 46 66M-16 264q28 69 98 110M25 177q-20 67 -1 140M84 556q19 70 122 79M4 390q-76 36 -80 147M102 216q20 72 -48 141M112 721q32 72 -60 146M5 715q9 45 64 66M100 403q-37 55 52 123M71 362q16 33 45 57M84 266q-16 59 -15 122M56 412q37 44 98 60M109 844q-22 27 2 69M40 837q13 27 -26 55M-13 615q37 51 34 120M66 168q66 21 91 104M-3 595q-77 25 -77 143M83 101q40 44 86 83M101 119q-13 26 4 59M-7 470q-58 61 -28 166M93 325q3 57 5 115M66 438q11 70 62 127M121 809q-7 31 -13 62M52 703q21 30 -27 68M106 847q41 45 60 106M36 586q18 77 -6 158M52 442q-55 13 -54 98M120 117q-5 31 -10 63M71 156q28 60 18 132M58 400q-3 40 58 56M72 512q-50 56 -33 147M38 511q-9 28 30 49M-8 382q-39 19 -25 84M-17 210q-15 61 43 119M110 726q84 -8 116 123M48 364q1 37 63 40M121 360q28 64 -69 120M67 253q63 25 78 112M31 99q42 11 45 74M-6 408q80 14 129 98M33 144q21 30 -16 71M34 798q-28 45 -41 98M-9 790q-29 27 -11 79M3 467q53 27 66 98M59 292q14 29 54 33M45 490q24 32 1 81M39 674q-16 50 -11 105M17 825q22 70 6 146M64 642q44 56 30 138M94 340q14 31 16 65M109 118q24 52 79 84M80 624q35 50 -10 122M59 311q5 55 96 56M48 680q-1 27 4 54M123 598q19 77 87 133M115 748q4 53 14 105M26 752q78 33 126 112M44 564q61 7 65 104M106 176q-60 48 -49 145M89 239q-9 27 9 57M94 257q1 30 21 57M81 141q52 58 13 155M112 305q15 26 51 31M8 757q-8 29 21 56" fill="none" stroke="#fff" stroke-width="0.6" opacity="0.24"/>
<path d="M28 374q43 21 83 49M52 629q4 30 48 37M42 709q-49 44 -46 123M12 420q-58 68 43 173M14 658q44 27 58 86M124 517q-13 33 22 67M-8 768q44 -1 55 69M31 840q-0 50 46 89M13 728q35 73 -74 145M93 746q36 54 -26 127M78 628q60 46 43 146M34 657q-81 38 -63 167M18 538q50 28 25 112M33 826q-27 78 73 149M55 818q-19 24 -29 54M118 475q-11 38 36 69M62 634q6 84 18 167M60 553q20 86 88 153M52 351q3 32 3 65M11 521q32 29 56 67M-3 442q-25 26 -6 72M40 420q5 52 -17 104M-20 401q-17 57 -49 109M66 351q43 70 118 113M26 787q1 57 63 94M104 459q-1 43 -41 75M55 618q-20 54 23 114M16 546q38 74 -2 167M31 566q-15 59 71 98M14 770q-3 59 -41 112M-3 610q11 52 -29 102M100 389q11 75 25 150M22 638q-5 70 70 122M96 737q23 40 70 61M72 805q31 12 23 63M-13 604q-9 31 33 55M-11 497q27 66 -24 140M120 553q-28 47 -27 107M119 333q-46 47 20 129M67 448q63 5 93 85M31 842q17 39 58 61M53 813q49 58 77 130M124 819q37 37 71 77M48 634q-13 37 -3 78M99 532q18 41 53 73M-3 419q6 71 77 120M59 384q-16 29 32 59M47 773q46 9 57 74M36 687q39 30 18 97M19 735q8 89 125 129M5 302q-18 27 -16 63M53 533q-11 29 8 62M102 321q75 28 91 132M1 755q9 89 -87 156M-1 306q-3 50 75 65M90 402q56 28 52 115M-12 408q-12 30 35 54M121 567q-19 60 45 118M40 820q-27 38 -41 84M119 472q-45 40 -59 105M-6 523q-34 25 1 85M38 620q-27 41 -17 96M86 738q19 47 52 86M45 567q58 49 24 149M11 371q-25 34 20 82M10 553q30 36 -15 93M14 698q80 32 83 152M24 579q46 12 48 83M53 723q20 87 80 159M33 507q22 28 41 59M57 750q3 32 51 38M32 710q14 45 -30 89M93 471q3 30 15 58M44 418q-5 85 116 126M25 479q34 37 50 88M119 309q16 61 58 112M28 707q-17 35 29 73M10 698q-32 24 -32 74M93 496q-16 35 -29 71M122 597q-32 44 -35 102M50 701q-43 59 -16 145M11 669q32 68 -30 147M60 308q2 69 -63 122M67 477q-40 66 26 152M122 672q48 38 24 119M-15 802q11 79 -74 141M71 410q-25 73 80 133M-18 740q43 58 -10 143M31 721q28 29 53 60M5 449q43 -1 61 59" fill="none" stroke="#fff" stroke-width="0.6" opacity="0.48"/>
<path d="M215 796q32 14 58 39M120 791q62 -21 120 54M231 774q-29 73 5 157M124 781q72 -14 118 88M314 841q-3 48 -22 94M198 829q31 56 47 119M336 823q46 14 66 71M357 765q15 46 48 84M129 831q39 8 67 44M121 865q51 55 134 66M360 822q8 49 26 96M192 779q-47 50 27 135M354 824q56 2 85 72M341 839q-9 42 46 72M222 768q35 33 5 96M340 782q53 10 84 68M193 807q-15 55 -45 106M333 857q-22 15 -20 49M317 835q31 53 -6 122M361 843q54 8 78 76M166 826q17 19 42 28M272 855q39 -15 78 33M356 845q28 43 83 59M274 811q33 15 20 70M144 813q72 13 122 83M104 828q11 65 8 132M356 831q3 69 -55 126M221 782q9 45 11 92M203 779q31 57 25 127M136 825q-28 48 15 109M364 840q4 77 27 151M245 782q41 19 55 71M177 779q51 22 96 56M325 836q28 70 -59 138M284 857q29 -15 57 31M150 859q21 26 -20 63M130 851q45 33 69 89M218 827q-7 28 -23 52M300 843q36 19 10 80M164 819q-29 49 -38 108M207 839q-35 37 -46 91M249 787q-6 29 -21 54M359 820q26 26 38 63M309 832q30 71 21 153M180 825q-57 28 -50 118M332 762q-10 37 8 77M320 845q45 -0 71 57M332 834q-12 54 27 107M227 779q-28 61 -58 122M257 782q13 25 41 38M328 788q47 12 75 62M312 786q2 47 66 68M299 772q17 22 46 31M283 777q72 -4 96 107M305 847q-17 39 7 85M358 819q-38 44 16 115M373 830q12 29 23 59M219 831q32 21 28 71M310 820q-0 36 -9 71M133 778q-12 38 46 66M130 814q71 -21 129 72M340 793q10 29 34 50M120 830q-0 40 23 77M299 767q-60 41 -53 136M359 796q8 48 82 53M290 771q-1 69 -12 138M282 851q23 64 63 121M320 849q25 25 58 40M197 791q11 48 93 34M214 783q58 3 63 98M148 815q61 15 70 105M118 856q-18 58 -11 120M154 776q31 54 54 113M240 768q-8 37 -32 69M325 859q-5 50 55 83M237 772q42 -11 65 58M118 854q11 70 -33 137M198 859q48 8 88 42M308 832q-52 58 -77 136M357 823q51 13 80 69M355 844q42 44 105 61M316 775q11 29 13 61M201 797q51 15 52 93M248 768q1 27 -0 54M101 842q-22 62 -54 120M230 839q40 19 79 41M148 808q14 30 37 54M222 773q6 37 21 72M189 835q12 22 9 50M312 795q-60 41 -18 144M310 805q21 21 22 55M173 844q-37 47 -18 118M220 827q14 22 29 43M346 812q6 46 -32 87M145 805q27 15 39 48M367 842q18 33 36 67M193 825q12 58 79 88M178 783q-29 49 26 110M328 808q14 67 48 128M134 800q27 55 105 65M278 766q4 26 26 45M311 781q18 21 -2 55M359 783q-33 69 14 152M228 805q-2 33 33 58M246 840q29 25 29 70M133 836q-26 38 32 87M202 797q39 9 60 54M243 804q46 54 55 131M270 814q-56 16 -48 105M201 780q70 -4 106 91M181 849q62 15 114 56M162 859q16 33 -20 71M255 768q-3 43 -36 78M115 811q-5 32 15 62M244 846q-19 70 -55 135M197 827q43 26 49 87M142 771q-56 50 17 149M175 782q13 28 54 29M197 799q63 5 98 81M367 762q-13 46 -37 88M240 785q-24 48 -39 100M344 829q5 31 -15 61M159 814q72 17 103 107M209 803q40 50 79 101M323 797q-3 71 -33 138M362 857q5 55 82 75M164 851q57 41 90 108M364 852q8 24 27 44M259 791q-20 44 -35 89M163 837q-18 27 19 63M178 774q-29 38 -4 96M219 818q44 59 -5 146M131 810q66 20 112 80M200 769q42 16 61 66M159 790q-2 32 -3 63M282 762q20 64 -27 130M116 768q-14 24 -16 52M264 829q24 43 42 90M312 771q42 32 71 76M271 801q-36 9 -33 66M105 845q38 15 71 41M355 774q24 64 45 129M302 865q7 38 -14 76M254 839q-62 36 -67 126M271 835q24 65 -41 132M163 803q-37 20 -38 76M182 834q-34 72 -47 152M267 778q17 32 -19 71M341 815q-15 32 29 65M292 851q25 45 53 88M126 762q-21 39 16 88M314 830q2 38 17 75M287 787q2 29 23 53M221 783q36 59 -2 138M102 821q-26 15 -25 54M270 834q40 -24 87 34M365 864q-31 49 -2 115M137 863q49 2 51 83M123 857q22 48 81 67M304 806q41 58 2 142M208 821q46 33 1 112M168 798q10 58 -34 113M259 791q-59 21 -57 113M209 774q-26 23 -11 69M315 851q56 24 27 118M178 773q50 -22 97 48M239 776q-6 69 108 87M277 825q6 48 76 59M120 800q37 3 53 52M305 796q-34 26 -41 75M202 841q79 -4 142 69M307 794q51 -20 101 40M319 783q45 31 99 46M280 835q37 65 135 63M309 761q-2 36 48 55M175 802q65 -3 99 85M230 839q20 32 42 62M153 836q24 29 -15 74M204 761q-33 70 -40 150M246 822q19 51 61 91M337 791q47 -14 81 56M187 814q-54 18 -31 111M320 863q14 41 -27 82M295 838q15 68 69 122M329 760q21 70 -35 142M335 788q-56 43 -37 137M127 780q18 33 20 74M369 856q13 32 55 40M259 761q13 33 -31 63M348 847q9 56 98 57M379 855q-3 76 -37 149M299 850q-45 36 -24 113M312 857q19 70 -52 137M195 812q18 36 76 28M373 812q8 30 20 59M361 792q12 69 11 139M221 835q43 5 69 53M118 786q-2 66 -30 129M132 814q1 60 79 89M201 794q-41 59 -32 141M194 857q49 62 142 70M117 778q45 62 -26 151M273 850q-49 58 9 152M150 769q-34 18 -25 73M368 801q-5 36 -8 73M134 826q45 -17 80 54M374 825q2 37 44 60M237 819q42 16 82 37M335 781q54 -7 99 46M111 771q37 32 36 90M297 765q49 18 68 79M371 796q29 72 64 141M165 810q-9 70 -69 124M121 857q22 19 38 45M314 799q-38 66 -27 151M347 822q62 0 109 59M326 854q62 16 51 117M261 829q6 28 -21 53M313 824q75 21 66 142M344 772q61 -8 88 85" fill="none" stroke="#fff" stroke-width="0.6" opacity="0.24"/>
<path d="M661 792q16 47 -17 99M672 856q-1 25 -8 49M368 807q-0 46 62 69M653 843q43 12 80 38M645 853q63 1 118 45M354 825q-21 65 39 130M537 842q1 46 -30 87M614 849q31 40 -2 102M646 823q33 27 -4 86M447 822q33 15 59 42M400 790q-0 66 56 119M383 801q-11 16 -8 39M642 786q35 1 66 26M619 768q54 -16 90 67M590 799q33 23 48 65M674 856q-24 49 24 106M386 809q22 54 107 45M397 804q40 24 13 92M512 796q55 34 22 127M567 808q18 24 31 51M390 831q60 22 83 97M429 780q-44 44 -6 124M557 827q46 9 53 77M706 805q9 24 19 47M422 863q35 -13 67 35M425 813q41 32 92 47M662 796q-10 36 8 73M755 779q31 51 4 120M361 814q-10 50 33 96M480 845q16 28 -1 64M530 850q-17 44 -28 89M548 839q51 23 103 42M576 850q6 45 78 47M443 825q26 52 79 86M398 775q1 42 49 69M736 818q8 42 75 42M373 806q51 12 72 76M359 780q-15 38 25 78M429 828q-8 20 -16 39M427 800q55 18 81 83M753 782q52 6 68 79M412 795q-7 61 8 122M460 819q11 37 -36 68M356 808q-49 45 -56 122M438 800q13 40 63 55M353 815q13 49 76 67M662 796q1 21 -14 39M402 832q48 15 37 93M384 839q15 64 12 131M591 805q-10 33 -21 66M671 799q-11 22 22 45M550 809q38 14 65 48M418 798q52 6 59 86M757 849q29 32 80 31M357 854q-3 23 -21 42M747 790q48 36 -8 120M541 795q-13 20 -10 47M350 824q-36 55 51 123M685 833q33 37 53 84M652 862q-1 27 4 55M563 854q11 38 49 63M594 812q26 17 11 62M523 816q11 38 -4 80M743 855q58 24 95 82M362 844q28 60 40 127M357 801q-10 30 0 63M436 830q54 -12 103 40M503 862q2 24 41 24M681 820q1 43 26 82M683 774q43 13 51 75M386 828q-8 60 -58 107M481 864q29 40 -21 97M395 839q50 17 58 89M628 814q26 1 45 27M505 817q5 29 -25 54M563 783q45 8 85 32M614 813q40 -14 75 39M372 850q-50 46 -48 127M598 813q-15 33 22 68M535 856q10 31 36 54M636 811q13 20 36 32M396 849q43 36 46 103M721 785q-19 13 -23 41M466 859q4 57 19 112M662 790q53 7 57 90M461 781q31 -9 52 40M574 804q-18 66 -10 136M616 854q-39 16 -37 76M519 808q55 17 80 82M473 807q50 -35 113 45M396 854q9 19 -5 42M513 762q-6 37 54 51M362 833q50 -13 77 68M656 857q26 63 123 61M470 811q25 -15 54 20M485 786q23 -4 41 21M364 774q23 34 -20 80M704 778q3 22 33 30M528 821q-29 56 40 119M676 816q-20 23 0 62M557 763q59 33 81 108M390 863q33 36 45 87M449 794q-33 30 -35 82M598 786q23 62 -46 123M360 836q53 35 104 73M557 789q33 12 18 69M565 852q-26 35 5 86M360 782q21 4 23 35M676 809q-20 22 5 58M727 796q36 10 57 48M501 832q-22 61 -15 129M685 828q29 -1 51 27M385 787q9 56 6 114M569 827q12 40 2 83M559 821q36 24 72 48M660 790q-36 43 -49 101M551 778q22 28 42 57M371 762q-2 20 -20 35M509 864q21 27 40 56M604 852q-17 17 1 48M721 771q-51 41 -27 129M731 792q-31 50 13 117M593 853q-29 27 5 78M512 771q-32 22 -28 72M712 842q0 36 1 72M505 845q5 42 52 66M388 843q-6 54 27 104M442 853q30 23 11 75M426 764q27 -2 35 41M362 771q23 8 37 33M385 777q-6 38 16 76M437 828q39 14 55 62M378 865q10 17 28 29M364 771q27 14 44 41M481 792q-31 23 -11 77M635 853q11 35 33 66M759 768q-4 61 4 122M392 865q43 51 80 105M390 816q-3 35 46 54M718 820q9 52 8 106M662 824q-58 17 -59 105M356 809q34 -8 58 41M705 808q-17 59 30 119M704 764q34 28 76 44M754 797q32 -5 54 36M654 817q49 30 82 82M423 768q-32 52 -17 122M743 861q25 10 50 19M557 797q-4 33 50 44M547 804q-35 44 -8 113M669 792q14 43 64 63M453 855q30 10 54 34M414 774q9 18 26 32M570 775q-7 40 -6 81M712 813q36 -6 63 38M713 785q42 6 76 39M669 762q36 -2 53 48M556 854q27 41 -37 91M608 776q-29 42 29 98M578 787q56 12 101 55M471 817q43 26 5 100M691 829q-31 44 -31 102M454 796q-34 12 -28 66M449 808q-25 46 -46 93M344 801q2 48 81 53M449 858q-26 11 -22 53M639 778q12 49 84 57M467 841q-8 25 5 52M462 778q-7 21 18 40M355 863q-41 50 -62 113M755 765q41 14 48 73M629 846q16 16 19 41M700 864q-4 20 22 35M636 764q-23 31 26 72M580 858q16 34 35 66M377 803q-0 29 36 45M581 836q18 26 10 62M418 826q1 26 34 41M395 862q-17 51 65 86M442 852q31 35 56 75M567 832q-19 34 -9 77M708 814q37 22 34 80M595 788q56 36 72 112M480 829q50 38 21 123M450 778q17 36 66 45M689 781q2 29 -1 59M393 785q-10 55 -22 110M713 772q53 7 70 82M528 805q33 6 54 41M568 796q-8 36 17 71M709 825q24 36 -20 84M717 781q54 -19 102 53M554 805q40 -14 77 36M634 848q31 37 45 85M591 862q49 -10 72 69M725 766q14 36 35 68M445 779q-36 49 36 116M514 786q-2 26 32 41M677 775q-24 38 -32 84M605 839q26 28 57 50M605 836q14 26 44 40M519 862q-67 11 -59 123M712 843q26 54 108 51M412 772q15 24 -20 54M490 797q21 21 38 45M694 764q-15 65 50 124M352 820q4 27 43 35M724 865q21 1 39 15M497 771q-42 10 -32 81M359 809q17 67 118 70M389 797q-13 48 -45 88M596 809q-10 23 -12 48M723 763q19 36 51 64M690 817q67 -9 119 65M679 772q50 17 92 54M696 766q22 10 42 25M410 777q-9 58 49 107M508 796q47 28 76 78M636 772q46 -12 70 64M717 848q16 19 22 45M485 797q26 6 24 49M372 775q41 -1 63 52M401 821q-6 33 16 66M564 782q20 44 -27 93M549 765q50 40 81 100M550 763q-23 59 56 114M533 863q-23 11 -24 45M444 823q26 17 24 58M754 851q6 61 59 107M498 846q-33 17 -18 72M490 783q14 58 -39 113M561 777q-23 11 -6 50M720 798q-23 36 -31 80M721 762q32 15 67 25M649 781q17 -10 36 18M427 859q30 14 31 59M525 786q36 23 64 56M749 804q15 17 42 19M562 822q7 34 -30 63M513 860q-35 33 -32 91M469 808q14 48 75 66M575 850q23 55 86 83M704 818q10 38 50 60M462 862q11 69 -0 140M555 841q-24 8 -23 45M733 799q6 24 28 42M521 799q61 -14 95 80M729 774q32 8 29 60M369 772q32 0 60 24M574 855q31 55 41 119M693 785q23 22 33 53M547 863q13 38 -8 80M647 827q25 61 -60 118M715 769q33 13 44 55M502 782q11 32 25 62M752 766q28 -1 48 28M744 846q67 18 54 129M357 779q9 60 -22 120M716 802q-19 56 21 116M576 795q0 41 65 49" fill="none" stroke="#fff" stroke-width="0.7" opacity="0.16"/>
<path d="M418 852q-0 31 -3 62M415 814q-2 63 12 126M309 812q55 61 78 145M299 860q37 -4 49 56M135 784q-13 28 23 58M282 827q-14 44 -41 83M408 855q-37 26 -15 90M106 772q28 16 17 62M412 797q77 -5 129 85M371 800q72 20 104 109M408 768q8 37 68 33M186 785q12 29 35 53M234 848q-26 52 -29 113M403 798q25 54 -48 109M155 840q6 31 -30 54M348 848q35 37 84 59M286 803q-45 68 34 160M193 863q36 32 64 72M371 765q-26 69 -54 137M240 839q42 47 -21 125M245 792q69 39 63 145M406 801q-36 57 -4 134M341 785q-37 33 8 100M140 769q31 -7 53 35M232 823q31 13 28 61M110 824q52 30 79 90M377 809q56 48 109 99M296 857q48 8 87 45M194 764q-26 66 79 118M374 851q21 25 51 42M411 764q-7 50 42 91M355 840q-17 26 -10 61M373 793q27 71 139 61M106 819q45 52 89 106M373 847q63 -0 97 81M136 833q-27 75 76 139M361 810q44 -18 80 53M263 844q69 -45 151 66M412 793q59 56 112 117M250 857q-23 22 -29 56M130 820q6 72 71 125M308 847q45 12 40 85M233 838q8 45 84 36M215 861q18 37 -2 82M357 834q19 55 77 87M313 847q20 79 79 142M284 861q52 27 22 115M118 853q43 28 32 97M153 801q59 29 50 122M170 799q25 57 111 56M388 826q49 64 118 108M361 779q33 -17 67 32M272 814q-20 62 -38 124M105 855q7 31 26 58M390 766q53 31 6 122M182 772q40 39 44 103M323 848q51 -8 95 38M268 799q31 41 -3 103M346 789q51 52 73 126M146 804q55 -24 102 63M156 846q-30 46 22 107M138 787q60 39 98 104M111 795q35 9 66 32M390 795q10 56 20 112M365 779q40 13 70 47M192 783q58 26 97 81M302 779q-1 41 48 66M187 792q61 7 103 66M318 801q-37 46 20 116M179 850q30 52 94 76M107 792q0 39 38 67M136 804q33 61 107 87M353 815q26 75 26 157M403 790q76 20 75 138M242 836q13 28 12 62M364 806q7 43 53 70M115 840q4 56 75 84M356 841q7 37 60 46M280 790q-8 51 51 89M344 806q26 69 -13 148" fill="none" stroke="#fff" stroke-width="0.6" opacity="0.42"/>
</g>
<path d="M640 800Q720 790 800 772M650 838Q740 815 830 790M690 858Q760 830 850 800M640 812Q730 800 880 796M700 790Q760 800 820 830M720 862Q800 840 880 812M805 800Q870 790 940 780M655 845Q700 800 760 765M700 860Q730 820 800 764" fill="none" stroke="#ddd" stroke-width="1.1" opacity="0.7"/>
<path d="M1322 625Q1345 632 1368 648M1324 640Q1350 655 1385 690M1322 655Q1345 670 1365 700M1320 610Q1340 612 1358 622M1318 740Q1350 745 1385 775M1322 770Q1345 780 1372 815M1326 800Q1345 815 1365 850M1330 690Q1335 760 1362 860" fill="none" stroke="#ddd" stroke-width="1" opacity="0.65"/>
<g filter="url(#b6)"><circle cx="1530" cy="52" r="30" fill="#fff" opacity=".075"/><circle cx="1592" cy="66" r="28" fill="#fff" opacity=".065"/><ellipse cx="1585" cy="150" rx="40" ry="80" fill="#fff" opacity=".04"/><ellipse cx="1440" cy="90" rx="40" ry="30" fill="#fff" opacity=".03"/></g>
</svg>
<!-- back explorer window -->
<svg width="0" height="0" style="left:0;top:0"><defs>
<symbol id="fold" viewBox="0 0 13 16"><rect x=".5" y=".5" width="11" height="15" fill="#ffe896" stroke="#ebc754" stroke-width="1"/><path d="M2 1.5V14.5" stroke="#fff0b8" stroke-width="1"/><path d="M10 9.6Q10 9 10.6 9H11.9Q12.5 9 12.5 9.6V15.5H10Z" fill="#f3d368" stroke="#e6c04c" stroke-width=".8"/></symbol>
<symbol id="pc" viewBox="0 0 16 16"><rect x=".5" y="2" width="15" height="9.5" fill="#3fb2f2" stroke="#2b7cc4" stroke-width=".8"/><rect x="1.6" y="3" width="12.8" height="7.4" fill="#56c6fb"/><rect x="6" y="11.5" width="4" height="1.6" fill="#9aa7b4"/><rect x="3" y="13.2" width="10" height="1" fill="#7f8d9b"/><rect x="1" y="14.6" width="14" height=".8" fill="#b9c6d2"/></symbol>
<symbol id="d3" viewBox="0 0 16 16"><path d="M8 .8L15 4.2V11.6L8 15.2L1 11.6V4.2Z" fill="#38c3d8"/><path d="M8 .8L15 4.2L8 7.6L1 4.2Z" fill="#a8ecf3"/><path d="M8 7.6L15 4.2V11.6L8 15.2Z" fill="#178fb4"/><path d="M1 4.2L8 7.6V15.2L1 11.6Z" fill="#5fd6e4"/></symbol>
<symbol id="pic" viewBox="0 0 16 16"><rect x=".6" y="2.6" width="14.8" height="11" fill="#fdfdfd" stroke="#8e959c" stroke-width=".9"/><rect x="2" y="4" width="12" height="8.2" fill="#bfe3f8"/><path d="M2 10.2Q5 6.5 8 9.2Q10.5 7.4 14 10V12.2H2Z" fill="#3d6e55"/><path d="M2 11.2H14V12.2H2Z" fill="#4c8fc9"/></symbol>
<symbol id="desk" viewBox="0 0 16 16"><rect x=".5" y="2.2" width="15" height="11.3" fill="#1187e0" stroke="#0d69b7" stroke-width=".8"/><rect x="1.4" y="3" width="13.2" height="8" fill="#2aa0f4"/><rect x=".9" y="11.8" width="14.2" height="1.4" fill="#0b5ea3"/><rect x="2" y="12.2" width="1.3" height=".7" fill="#fff"/><rect x="12" y="12.2" width="2.4" height=".7" fill="#cfe6f8"/></symbol>
<symbol id="doc" viewBox="0 0 16 16"><path d="M2.5 .8H10.4L13.5 3.9V15.2H2.5Z" fill="#fff" stroke="#8a9097" stroke-width=".9"/><path d="M10.4 .8V3.9H13.5" fill="#e9edf0" stroke="#8a9097" stroke-width=".7"/><path d="M4.4 5.6H9M4.4 7.6H11.6M4.4 9.6H11.6M4.4 11.6H11.6M4.4 13.2H9.5" stroke="#3b8ad6" stroke-width=".9"/><rect x="4.3" y="2.6" width="3.4" height="2" fill="#3b8ad6"/></symbol>
<symbol id="dl" viewBox="0 0 16 16"><path d="M5.6 .8H10.4V7.4H14.6L8 14.6L1.4 7.4H5.6Z" fill="#2d8ae3"/><path d="M5.6 .8H10.4V3H5.6Z" fill="#5db0f5"/></symbol>
<symbol id="mus" viewBox="0 0 16 16"><path d="M7.2 1.2C9 3 12.6 3.6 12 8.4C11.4 6 9.6 5.4 8.4 5.4V12.2A3 2.6 0 1 1 7.2 10Z" fill="#1a9bf0"/></symbol>
<symbol id="vid" viewBox="0 0 16 16"><rect x="1.2" y="1" width="13.6" height="14" fill="#3b3f45"/><rect x="3.6" y="1.8" width="8.8" height="5.6" fill="#e0a227"/><rect x="3.6" y="8.4" width="8.8" height="5.6" fill="#4f9a3a"/><path d="M1.9 2.2H3M1.9 4.6H3M1.9 7H3M1.9 9.4H3M1.9 11.8H3M1.9 14H3M13 2.2H14.1M13 4.6H14.1M13 7H14.1M13 9.4H14.1M13 11.8H14.1M13 14H14.1" stroke="#e8e8e8" stroke-width="1"/><rect x="5" y="3" width="3" height="3" fill="#c7372c"/><rect x="8.5" y="9.6" width="3" height="3" fill="#2f6fc0"/></symbol>
<symbol id="drv" viewBox="0 0 16 16"><path d="M2.2 9.2H13.8L15 12V14.4H1V12Z" fill="#c9ccd0"/><rect x="1" y="11.8" width="14" height="2.8" fill="#30343a"/><rect x="12" y="12.8" width="1.6" height=".9" fill="#37e05a"/></symbol>
<symbol id="drvc" viewBox="0 0 16 16"><path d="M2.2 9.2H13.8L15 12V14.4H1V12Z" fill="#c9ccd0"/><rect x="1" y="11.8" width="14" height="2.8" fill="#30343a"/><rect x="12" y="12.8" width="1.6" height=".9" fill="#37e05a"/><path d="M1 1.4H3.6V4H1ZM4.3 1.4H7V4H4.3ZM1 4.7H3.6V7.3H1ZM4.3 4.7H7V7.3H4.3Z" fill="#10a9f0"/></symbol>
<symbol id="net" viewBox="0 0 16 16"><circle cx="9" cy="6.4" r="5.6" fill="#3a9de6"/><path d="M5 3.4Q8 1 12 2.6Q13.6 5 12.4 7.6Q9 6 7.6 8.6Q5.2 7.6 5 3.4Z" fill="#8fd0f7"/><rect x=".6" y="9.8" width="9" height="5.4" fill="#2b86d8" stroke="#1d69b3" stroke-width=".6"/><rect x="1.6" y="10.7" width="7" height="3.4" fill="#63bdf6"/></symbol>
<symbol id="chu" viewBox="0 0 10 6"><path d="M1 5L5 1L9 5" fill="none" stroke="#4a4a4a" stroke-width="1.7"/></symbol>
<symbol id="chd" viewBox="0 0 10 6"><path d="M1 1L5 5L9 1" fill="none" stroke="#4a4a4a" stroke-width="1.7"/></symbol>
<symbol id="vdet" viewBox="0 0 22 23"><rect x=".5" y=".5" width="21" height="22" fill="#cfe8f7" stroke="#26a0da"/><path d="M10 7.500H14M16 7.500H20M10 11.500H14M16 11.500H20M10 15.500H14M16 15.500H20" stroke="#6e6e6e" stroke-width="1"/><rect x="4.500" y="5.500" width="4" height="12" fill="#fff" stroke="#8a8a8a" stroke-width="1"/><rect x="6" y="7" width="1" height="1" fill="#3a7a4a"/><rect x="6" y="11" width="1" height="1" fill="#3b78e9"/><rect x="6" y="15" width="1" height="1" fill="#e0242c"/></symbol>
<symbol id="vbig" viewBox="0 0 14 12"><rect x=".5" y=".5" width="13" height="11" fill="#fff" stroke="#8a8f94"/><rect x="2" y="2" width="10" height="8" fill="#9fd2f3"/><path d="M2 8Q5 4.6 8 7Q10 6 12 7.6V10H2Z" fill="#335f4a"/><rect x="2" y="9" width="10" height="1" fill="#3f86c9"/></symbol>
</defs></svg>
<div class="win" style="left:118px;top:300px;width:1123px;height:464px">
 <!-- nav pane -->
 <svg style="left:26px;top:150px" width="13" height="16"><use href="#fold"/></svg><div class="t" style="left:45px;top:151px;letter-spacing:-0.34px">OneDrive</div>
 <svg style="left:180px;top:148px" width="13" height="16"><use href="#fold"/></svg>
 <svg style="left:24px;top:181px" width="16" height="16"><use href="#pc"/></svg><div class="t" style="left:45px;top:182px;letter-spacing:-0.58px">Dieser PC</div>
 <svg style="left:32px;top:205px" width="16" height="16"><use href="#d3"/></svg><div class="t" style="left:53px;top:206px;letter-spacing:-0.12px">3D-Objekte</div>
 <svg style="left:32px;top:229px" width="16" height="16"><use href="#pic"/></svg><div class="t" style="left:53px;top:230px;letter-spacing:-0.07px">Bilder</div>
 <svg style="left:32px;top:253px" width="16" height="16"><use href="#desk"/></svg><div class="t" style="left:53px;top:254px;letter-spacing:-0.25px">Desktop</div>
 <svg style="left:32px;top:277px" width="16" height="16"><use href="#doc"/></svg><div class="t" style="left:53px;top:278px;letter-spacing:0.01px">Dokumente</div>
 <svg style="left:32px;top:301px" width="16" height="16"><use href="#dl"/></svg><div class="t" style="left:53px;top:302px;letter-spacing:-0.1px">Downloads</div>
 <svg style="left:32px;top:325px" width="16" height="16"><use href="#mus"/></svg><div class="t" style="left:53px;top:326px;letter-spacing:0.03px">Musik</div>
 <svg style="left:32px;top:349px" width="16" height="16"><use href="#vid"/></svg><div class="t" style="left:53px;top:350px;letter-spacing:-0.33px">Videos</div>
 <div class="a" style="left:0;top:370px;width:139px;height:24px;background:#d9d9d9"></div>
 <svg style="left:32px;top:373px" width="16" height="16"><use href="#drvc"/></svg><div class="t" style="left:53px;top:374px;letter-spacing:-0.6px">OS (C:)</div>
 <svg style="left:32px;top:397px" width="16" height="16"><use href="#drv"/></svg><div class="t" style="left:53px;top:398px;letter-spacing:-0.48px">Games (D:)</div>
 <svg style="left:24px;top:429px" width="16" height="16"><use href="#net"/></svg><div class="t" style="left:45px;top:430px;letter-spacing:-0.22px">Netzwerk</div>
 <!-- nav scrollbar -->
 <div class="a" style="left:140px;top:0;width:16px;height:441px;background:#f0f0f0"></div>
 <div class="a" style="left:140px;top:261px;width:16px;height:135px;background:#cdcdcd"></div>
 <svg style="left:143px;top:429px" width="10" height="6"><use href="#chd"/></svg>
 <!-- file list -->
 <div class="a" style="left:174px;top:419px;width:574px;height:22px;background:#d9d9d9"></div>
 <svg style="left:180px;top:169px" width="13" height="16"><use href="#fold"/></svg><div class="t" style="left:198px;top:170px;letter-spacing:-0.1px">servicing</div>
 <svg style="left:180px;top:190px" width="13" height="16"><use href="#fold"/></svg><div class="t" style="left:198px;top:191px;letter-spacing:-0.37px">Setup</div>
 <svg style="left:180px;top:211px" width="13" height="16"><use href="#fold"/></svg><div class="t" style="left:198px;top:212px">ShellExperienceHost</div>
 <svg style="left:180px;top:232px" width="13" height="16"><use href="#fold"/></svg><div class="t" style="left:198px;top:233px;letter-spacing:-0.7px">SHELLNEW</div>
 <svg style="left:180px;top:253px" width="13" height="16"><use href="#fold"/></svg><div class="t" style="left:198px;top:254px;letter-spacing:-0.7px">SKB</div>
 <svg style="left:180px;top:274px" width="13" height="16"><use href="#fold"/></svg><div class="t" style="left:198px;top:275px">SoftwareDistribution</div>
 <svg style="left:180px;top:295px" width="13" height="16"><use href="#fold"/></svg><div class="t" style="left:198px;top:296px;letter-spacing:-0.49px">Speech</div>
 <svg style="left:180px;top:316px" width="13" height="16"><use href="#fold"/></svg><div class="t" style="left:198px;top:317px">Speech_OneCore</div>
 <svg style="left:180px;top:337px" width="13" height="16"><use href="#fold"/></svg><div class="t" style="left:198px;top:338px;letter-spacing:-0.38px">System</div>
 <svg style="left:180px;top:358px" width="13" height="16"><use href="#fold"/></svg><div class="t" style="left:198px;top:359px;letter-spacing:-0.48px">System32</div>
 <svg style="left:180px;top:379px" width="13" height="16"><use href="#fold"/></svg><div class="t" style="left:198px;top:380px;letter-spacing:-0.29px">SystemApps</div>
 <svg style="left:180px;top:400px" width="13" height="16"><use href="#fold"/></svg><div class="t" style="left:198px;top:401px">SystemResources</div>
 <svg style="left:180px;top:421px" width="13" height="16"><use href="#fold"/></svg><div class="t" style="left:198px;top:422px;letter-spacing:-0.67px">SysWOW64</div>
 <div class="t dt" style="left:438px;top:422px;letter-spacing:-0.62px">25.02.2018 10:45</div><div class="t dt" style="left:558px;top:422px;letter-spacing:-0.06px">Dateiordner</div>
 <!-- list scrollbar -->
 <div class="a" style="left:1107px;top:0;width:16px;height:441px;background:#f0f0f0"></div>
 <div class="a" style="left:1107px;top:290px;width:16px;height:34px;background:#cdcdcd"></div>
 <svg style="left:1110px;top:430px" width="10" height="6"><use href="#chd"/></svg>
 <!-- status bar -->
 <div class="a" style="left:0;top:441px;width:1123px;height:23px;background:#fff"></div>
 <div class="t st" style="left:14px;top:445px;letter-spacing:-0.38px">101 Elemente</div><div class="sep" style="left:94px;top:445px;height:16px"></div>
 <div class="t st" style="left:105px;top:445px;letter-spacing:-0.19px">1 Element ausgewählt</div><div class="sep" style="left:231px;top:445px;height:16px"></div>
 <svg style="left:1075px;top:441px" width="22" height="23"><use href="#vdet"/></svg>
 <svg style="left:1101px;top:446px" width="14" height="12"><use href="#vbig"/></svg>
</div>
<!-- Task-Manager -->
<svg width="0" height="0" style="left:0;top:0"><defs>
<linearGradient id="ffd" x1=".9" y1=".08" x2=".15" y2=".88"><stop offset="0" stop-color="#fff36e"/><stop offset=".3" stop-color="#ffbd2e"/><stop offset=".55" stop-color="#ff8a16"/><stop offset=".8" stop-color="#ff3647"/><stop offset="1" stop-color="#e31587"/></linearGradient>
<linearGradient id="ffb" x1=".4" y1="0" x2=".6" y2="1"><stop offset="0" stop-color="#00a6ff"/><stop offset=".55" stop-color="#0a6be8"/><stop offset="1" stop-color="#3a1fa8"/></linearGradient>
<linearGradient id="ffh" x1="0" y1=".5" x2="1" y2=".4"><stop offset="0" stop-color="#ff3647"/><stop offset=".6" stop-color="#ff7a16"/><stop offset="1" stop-color="#ff980e"/></linearGradient>
<linearGradient id="fff" x1=".3" y1="0" x2=".7" y2="1"><stop offset="0" stop-color="#fff36e"/><stop offset="1" stop-color="#ffc02e"/></linearGradient>
<symbol id="ffx" viewBox="0 0 24.5 25.5"><circle cx="12.200" cy="13.300" r="11" fill="url(#ffd)"/><circle cx="13" cy="10.500" r="7.500" fill="url(#ffb)"/><path d="M15.800 1.200C19 3.500 23.500 7 23.200 13.300C22 16 19 16.500 18 14.500C17.500 12 15.500 10.500 14.600 8.500C13.800 6 14.200 3.500 15.800 1.200Z" fill="url(#fff)"/><path d="M3.500 4L6 6.500C7.500 5.600 9 5.600 10 6.200L11.300 5.200L11.200 7.400L12.600 8.600C11.500 9.400 10.400 9.200 9.600 9.600C9.400 11 8.600 12 8 12.800C7 15 8 17.500 10 18.600L6 20C2 16 1.500 9 3.500 4Z" fill="url(#ffh)"/><path d="M8.200 14C10.500 15.600 12.500 14.200 14.400 14.600C13.800 16 11.500 16.200 10.200 17.200C9 16.400 8.400 15.200 8.200 14Z" fill="#ff980e"/></symbol>
</defs></svg>
<div class="win" style="left:48px;top:96px;width:365px;height:365px;border:1px solid #8f8f8f;border-top-color:#5c5c5c;border-left-color:#5c5c5c">
 <svg style="left:8px;top:8px" width="17" height="15" viewBox="0 0 17 15"><rect x="4.5" y=".5" width="12" height="9.5" fill="#dff1fb" stroke="#8a9197"/><path d="M5.5 6L7.6 3.2L9.6 6.2L11.6 4.2L13.5 5.4L15.5 3" fill="none" stroke="#2a8ad8" stroke-width="1.1"/><rect x="8.5" y="10.5" width="4" height="1.6" fill="#9aa3ab"/><rect x="6.5" y="12.4" width="8" height="1.4" fill="#b5bcc2"/><rect x=".8" y="4.2" width="2.4" height="9.6" fill="#c4cad0" stroke="#858c93" stroke-width=".7"/><rect x="1.4" y="5.2" width="1.2" height="1.4" fill="#3bc24a"/></svg>
 <div class="t" style="left:29px;top:8px;color:#999;letter-spacing:-0.07px">Task-Manager</div>
 <svg style="left:244px;top:14px" width="11" height="1"><rect width="11" height="1" fill="#999"/></svg>
 <svg style="left:288px;top:9px" width="11" height="11"><rect x=".5" y=".5" width="10" height="10" fill="none" stroke="#999"/></svg>
 <svg style="left:334px;top:9px" width="11" height="11"><path d="M.5 .5L10.5 10.5M10.5 .5L.5 10.5" stroke="#999" stroke-width="1"/></svg>
 <!-- firefox -->
 <svg style="left:6.500px;top:35.500px" width="16.500" height="17.200"><use href="#ffx"/></svg>
 <div class="t" style="left:29px;top:37px;letter-spacing:-0.21px">Firefox</div>
 <!-- malwarebytes -->
 <svg style="left:7px;top:64px" width="16" height="16" viewBox="0 0 16 16"><path d="M3.2 .5L8 6.600L12.800 .5C15 2.500 15.600 5 15.500 7.500C15.300 11 13.500 13.500 11.200 14.600C12 12.500 11.600 10.600 10.400 9.400L9.600 12.800L8 10.400L6.400 12.800L5.600 9.400C4.400 10.600 4 12.500 4.800 14.600C2.500 13.500 .7 11 .5 7.500C.4 5 1 2.500 3.200 .5Z" fill="#2d62a8"/></svg>
 <div class="t" style="left:29px;top:65px;letter-spacing:-0.07px">Malwarebytes Tray Application (32 Bit)</div>
 <!-- hta -->
 <svg style="left:7px;top:93px" width="16" height="14" viewBox="0 0 16 14"><rect x=".5" y=".5" width="15" height="13" fill="#fff" stroke="#9a9a9a"/><path d="M15.300 .5V13.300H.5" fill="none" stroke="#111" stroke-width="1.300"/><rect x="1.500" y="1.500" width="13" height="2.400" fill="#0a0ad0"/><path d="M8.6 2.3H9.8M10.6 2.3H11.8M12.6 2.3H13.8" stroke="#fff" stroke-width="1"/><rect x=".5" y="12.4" width="15" height="1.2" fill="#111"/></svg>
 <div class="t" style="left:29px;top:93px;letter-spacing:0.03px">Microsoft (R)-HTML-Anwendungshost (32 Bit)</div>
 <div class="a" style="left:0;top:314px;width:363px;height:1px;background:#a0a0a0"></div>
 <svg style="left:8px;top:329px" width="19" height="19" viewBox="0 0 19 19"><circle cx="9.5" cy="9.5" r="8.8" fill="#fff" stroke="#a6a6a6" stroke-width="1"/><path d="M5.6 7.8L9.5 11.6L13.4 7.8" fill="none" stroke="#8a8a8a" stroke-width="1.1"/></svg>
 <div class="t" style="left:34px;top:331px;letter-spacing:-0.13px">Mehr Details</div>
 <div class="a" style="left:271px;top:328px;width:90px;height:21px;background:#cccccc;border:1px solid #bfbfbf"></div>
 <div class="t" style="left:276px;top:331px;color:#7e8aa6;letter-spacing:.2px">Task beenden</div>
</div>
<!-- HTA dialog -->
<div class="win" style="left:392px;top:184px;width:816px;height:532px;background:#e4eaf2;border:2px solid #aab0b8;border-right-width:1px;border-bottom-width:1px">
 <div class="t" style="left:6px;top:3px;font-size:13px;line-height:20px;height:20px">Automatisch</div>
 <div class="a" style="left:6px;top:27px;width:801px;height:495px;background:#fff;border:1px solid #aab1bb;border-right-color:#6a6a6a;border-bottom-color:#6a6a6a"></div>
 <div class="t" style="left:83px;top:306px;font-size:15px;line-height:20px;height:20px;color:#333;letter-spacing:-0.03px">Get the fresh and new intuitive Chromium browser.</div>
 <div class="t" style="left:83px;top:331px;font-size:15px;line-height:20px;height:20px;color:#333;letter-spacing:-0.1px">Yahoo Provided Search on all of your compatible browsers.</div>
 <div class="t" style="left:85px;top:356px;font-size:15px;line-height:20px;height:20px;color:#333;letter-spacing:-0.14px">Direct and safe access to all of your favorite sites.</div>
 <div class="a" style="left:554px;top:402px;width:202px;height:41px;border:1px solid #3c8ddb;background:linear-gradient(#f4f4f4,#f0f0f0 50%,#e5e5e5);box-shadow:inset 0 0 0 1px #cfe4f7"></div>
 <div class="c" style="left:655px;top:414px;font-size:14.5px;line-height:20px;height:20px;color:#222">OK</div>
 <div class="t" style="left:59px;top:457px;font-size:11px;font-style:italic;color:#333;letter-spacing:-0.2px">Accept the Yahoo Terms of Use and Privacy policy, and the Chromium Terms and Privacy policy</div>
</div>
<!-- front explorer: SysWOW64 -->
<svg width="0" height="0" style="left:0;top:0"><defs>
<symbol id="qprop" viewBox="0 0 13 16"><path d="M.6 .6H9L12.4 4V15.4H.6Z" fill="#fff" stroke="#7d7d7d" stroke-width=".9"/><path d="M9 .6V4H12.4" fill="none" stroke="#7d7d7d" stroke-width=".8"/><path d="M3 8.6L5.6 11.2L10.2 5.6" fill="none" stroke="#f26522" stroke-width="1.5"/></symbol>
<symbol id="ipin" viewBox="0 0 21 21"><path d="M13.2 .8L20.2 7.8L17.4 9L14 12.6L13.6 16.8L4.2 7.4L8.4 7L12 3.6Z" fill="#a9b9d5"/><path d="M8.2 12.8L1 20" stroke="#a9b9d5" stroke-width="2.2" stroke-linecap="round"/></symbol>
<symbol id="icopy" viewBox="0 0 25 28"><path d="M.6 .6H10.4L14.6 4.8V19.4H.6Z" fill="#fff" stroke="#9a9a9a" stroke-width=".9"/><path d="M10.4 .6V4.8H14.6" fill="none" stroke="#9a9a9a" stroke-width=".8"/><path d="M2.6 5H9M2.6 7.4H12.4M2.6 9.8H12.4M2.6 12.2H12.4M2.6 14.6H12.4" stroke="#8fb6ea" stroke-width="1.1"/><path d="M9.6 8.2H19.6L24.2 12.8V27.4H9.6Z" fill="#fff" stroke="#8f8f8f" stroke-width=".9"/><path d="M19.6 8.2V12.8H24.2" fill="none" stroke="#8f8f8f" stroke-width=".8"/><path d="M11.8 12.6H18M11.8 15H22M11.8 17.4H22M11.8 19.8H22M11.8 22.2H22M11.8 24.6H22" stroke="#3f7fe0" stroke-width="1.2"/></symbol>
<symbol id="ipaste" viewBox="0 0 21 30"><rect x=".7" y="3.4" width="19.6" height="25.6" rx="1.2" fill="#9fb0d4" stroke="#8094c2" stroke-width=".9"/><rect x="2.8" y="6.4" width="15.4" height="20.4" fill="#eef2fa"/><path d="M3.6 9.4H17.4M3.6 12.2H17.4M3.6 15H17.4M3.6 17.8H17.4M3.6 20.6H17.4M3.6 23.4H17.4" stroke="#c5d0ea" stroke-width="1"/><path d="M6 6.6V4.2H8.6Q8.8 1 10.5 1Q12.2 1 12.4 4.2H15V6.6Z" fill="#b9c4dc" stroke="#8a9bbf" stroke-width=".8"/></symbol>
<symbol id="icut" viewBox="0 0 14 17"><path d="M3.4 .6L9.6 11.6M10.6 .6L4.4 11.6" stroke="#6d7379" stroke-width="1.3" fill="none"/><circle cx="3.6" cy="13.6" r="2.4" fill="none" stroke="#1b79d6" stroke-width="1.7"/><circle cx="10.4" cy="13.6" r="2.4" fill="none" stroke="#1b79d6" stroke-width="1.7"/></symbol>
<symbol id="ipath" viewBox="0 0 16 9"><rect x=".5" y=".5" width="15" height="8" fill="#bfe3fb" stroke="#7fb9e6"/><path d="M2.2 2.4L3.6 6.4M4.4 2.4L5.8 6.4" stroke="#1d4f82" stroke-width="1"/><path d="M7 6H8.4M9.6 6H11M12.2 6H13.6" stroke="#1d4f82" stroke-width="1.2"/></symbol>
<symbol id="ilnk" viewBox="0 0 14 17"><rect x=".7" y="2.2" width="12.6" height="14" rx="1" fill="#a9b7d8" stroke="#8799c4" stroke-width=".9"/><rect x="2.4" y="4.4" width="9.2" height="10" fill="#e9eef8"/><path d="M4.4 3.6V2.2H5.6Q5.8 .6 7 .6Q8.2 .6 8.4 2.2H9.6V3.6Z" fill="#b9c4dc" stroke="#8a9bbf" stroke-width=".6"/><path d="M5 12V8H8.4M8.8 6.4V9.8L10.4 8Z" fill="#5e78b4" stroke="#5e78b4" stroke-width="1.2" stroke-linejoin="round"/></symbol>
<symbol id="imove" viewBox="0 0 27 30"><path d="M.6 .8H20.6V28.4H.6Z" fill="#ffe79a" stroke="#ebc85c" stroke-width=".9"/><path d="M20.6 12H23.6V28.4H20.6Z" fill="#f7d66e"/><path d="M2.6 1.4V27.6" stroke="#fff3c4" stroke-width="1.4"/><path d="M10.4 20.6L18 13.6V17.6H26.4V23.8H18V27.8Z" fill="#2f8fe6" stroke="#2478cc" stroke-width=".6"/></symbol>
<symbol id="icopyto" viewBox="0 0 27 30"><path d="M.6 2.6H18.6V28.4H.6Z" fill="#ffe79a" stroke="#ebc85c" stroke-width=".9"/><path d="M18.6 14H23V28.4H18.6Z" fill="#f7d66e"/><path d="M2.6 3.2V27.6" stroke="#fff3c4" stroke-width="1.4"/><path d="M9.6 .6H17L20.6 4.2V15H9.6Z" fill="#fff" stroke="#a2a2a2" stroke-width=".8"/><path d="M13.6 3.6H21.8L26.2 8V19.2H13.6Z" fill="#fff" stroke="#8f8f8f" stroke-width=".8"/><path d="M15.4 7.4H21M15.4 9.6H24.4M15.4 11.8H24.4M15.4 14H24.4M15.4 16.2H24.4" stroke="#3f7fe0" stroke-width="1.1"/></symbol>
<symbol id="idel" viewBox="0 0 25 25"><path d="M2.4 2.4L22.6 22.6M22.6 2.4L2.4 22.6" stroke="#e30b1c" stroke-width="4.4"/></symbol>
<symbol id="iren" viewBox="0 0 28 26"><rect x=".6" y="8" width="26.8" height="10.6" fill="#fff" stroke="#8b8f94" stroke-width=".9"/><rect x="3.2" y="10.6" width="12.6" height="5.4" fill="#2d8ae3"/><path d="M22.4 1.6V24.4M18 1Q22.4 1 22.4 3.6Q22.4 1 26.8 1M18 25Q22.4 25 22.4 22.4Q22.4 25 26.8 25" fill="none" stroke="#555" stroke-width="1.5"/></symbol>
<symbol id="inewf" viewBox="0 0 21 30"><path d="M.8 4.2L13.4 .8V25.4L.8 28.6Z" fill="#ffe9a2" stroke="#eccb63" stroke-width=".8"/><path d="M13.4 11H20V25.4H13.4Z" fill="#f6d46c"/><path d="M13.4 .8V25.4" stroke="#e4bf55" stroke-width=".8"/></symbol>
<symbol id="inewi" viewBox="0 0 17 17"><rect x=".6" y=".6" width="8" height="6.4" fill="#dff0fb" stroke="#6d7a86" stroke-width=".8"/><rect x="1.4" y="1.4" width="6.4" height="1.6" fill="#2d7fd2"/><path d="M4.8 4.6H11.4L13.2 6.4V12.6H4.8Z" fill="#fff" stroke="#7d7d7d" stroke-width=".8"/><path d="M8.6 8.6H14.6L16.4 10.4V16.4H8.6Z" fill="#fff" stroke="#7d7d7d" stroke-width=".8"/><path d="M10 11.4H15M10 13H15M10 14.6H15" stroke="#c44" stroke-width=".7"/></symbol>
<symbol id="ieasy" viewBox="0 0 17 17"><path d="M5 1.2H12L15.6 4.8V16.2H5Z" fill="#fff" stroke="#7d7d7d" stroke-width=".9"/><path d="M12 1.2V4.8H15.6" fill="none" stroke="#7d7d7d" stroke-width=".8"/><path d="M.6 5H5.6M1.6 7.2H5.6M2.6 9.4H5.6M4.4 3.4V10.6" stroke="#2a6fc0" stroke-width="1"/></symbol>
<symbol id="iprops" viewBox="0 0 23 29"><path d="M.7 .7H16L22.3 7V28.3H.7Z" fill="#fff" stroke="#8e8e8e" stroke-width="1"/><path d="M16 .7V7H22.3" fill="none" stroke="#8e8e8e" stroke-width=".9"/><path d="M4.6 16.6L9.4 21.4L18.6 11.6" fill="none" stroke="#f26522" stroke-width="2.4"/></symbol>
<symbol id="iopen" viewBox="0 0 17 13"><rect x=".6" y=".6" width="15.8" height="11.8" fill="#fff" stroke="#5f666d" stroke-width="1"/><rect x="1" y="1" width="15" height="2" fill="#5f666d"/><rect x="3" y="4.8" width="5.4" height="5.4" fill="#1f6fd0"/><path d="M10 5.4H14.4M10 7.4H14.4M10 9.4H14.4" stroke="#8a8f94" stroke-width="1"/></symbol>
<symbol id="iedit" viewBox="0 0 15 17"><path d="M1.6 .8H9L12.6 4.4V16.2H1.6Z" fill="#f4f7fc" stroke="#b6c1d8" stroke-width=".9"/><path d="M9 .8V4.4H12.6" fill="none" stroke="#b6c1d8" stroke-width=".8"/><path d="M6 12.4L13 4.4L14.6 5.8L7.6 13.8L5.6 14.4Z" fill="#cfd8ea" stroke="#a3b1d0" stroke-width=".7"/></symbol>
<symbol id="ihist" viewBox="0 0 17 17"><path d="M.8 .8H8.6V11.6H.8Z" fill="#e6ebf5" stroke="#b6c1d8" stroke-width=".8"/><circle cx="10.6" cy="11" r="5.4" fill="#eef1f8" stroke="#9fafd0" stroke-width="1.2"/><path d="M10.6 11L13.4 8.2M10.6 11H8" stroke="#8e9dc0" stroke-width="1.1"/><path d="M3 12.6L6.4 15.8L2.4 16.2Z" fill="#9fafd0"/></symbol>
<symbol id="iall" viewBox="0 0 16 16"><rect x=".6" y=".6" width="6.6" height="6.6" fill="#9bd3fb" stroke="#2f90e0" stroke-width="1.1"/><rect x="8.8" y=".6" width="6.6" height="6.6" fill="#9bd3fb" stroke="#2f90e0" stroke-width="1.1"/><rect x=".6" y="8.8" width="6.6" height="6.6" fill="#9bd3fb" stroke="#2f90e0" stroke-width="1.1"/><rect x="8.8" y="8.8" width="6.6" height="6.6" fill="#9bd3fb" stroke="#2f90e0" stroke-width="1.1"/></symbol>
<symbol id="inone" viewBox="0 0 16 16"><rect x="1" y="1" width="5.6" height="5.6" fill="#fff" stroke="#a3a3a3" stroke-width="1"/><rect x="9.4" y="1" width="5.6" height="5.6" fill="#fff" stroke="#a3a3a3" stroke-width="1"/><rect x="1" y="9.4" width="5.6" height="5.6" fill="#fff" stroke="#a3a3a3" stroke-width="1"/><rect x="9.4" y="9.4" width="5.6" height="5.6" fill="#fff" stroke="#a3a3a3" stroke-width="1"/></symbol>
<symbol id="iinv" viewBox="0 0 16 16"><rect x="1" y="1" width="5.6" height="5.6" fill="#fff" stroke="#a3a3a3" stroke-width="1"/><rect x="8.8" y=".6" width="6.6" height="6.6" fill="#9bd3fb" stroke="#2f90e0" stroke-width="1.1"/><rect x=".6" y="8.8" width="6.6" height="6.6" fill="#9bd3fb" stroke="#2f90e0" stroke-width="1.1"/><rect x="9.4" y="9.4" width="5.6" height="5.6" fill="#fff" stroke="#a3a3a3" stroke-width="1"/></symbol>
<symbol id="dd" viewBox="0 0 7 4"><path d="M0 0H7L3.5 4Z" fill="#222"/></symbol>
</defs></svg>
<div class="win" id="fw" style="left:453px;top:88px;width:1125px;height:382px;border:1px solid #e5283f">
 <!-- titlebar (coords relative to 454,89) -->
 <svg style="left:10px;top:6px" width="13" height="16"><use href="#fold"/></svg>
 <div class="a" style="left:31px;top:9px;width:1px;height:12px;background:#8e8e8e"></div>
 <svg style="left:43px;top:6px" width="13" height="16"><use href="#qprop"/></svg>
 <svg style="left:65px;top:6px" width="13" height="16"><use href="#fold"/></svg>
 <svg style="left:86px;top:12px" width="8" height="7" viewBox="0 0 8 7"><rect width="8" height="1.2" fill="#111"/><path d="M.4 3H7.6L4 7Z" fill="#111"/></svg>
 <div class="a" style="left:101px;top:8px;width:1px;height:12px;background:#8e8e8e"></div>
 <div class="a" style="left:259px;top:3px;width:109px;height:28px;background:#e9cff5"></div>
 <div class="c rib" style="left:313px;top:9px;letter-spacing:-0.02px">Anwendungstools</div>
 <div class="t" style="left:381px;top:6px;letter-spacing:-0.67px">SysWOW64</div>
 <svg style="left:1003px;top:14px" width="11" height="1"><rect width="11" height="1.2" fill="#111"/></svg>
 <svg style="left:1049px;top:9px" width="10" height="10"><rect x=".6" y=".6" width="8.8" height="8.8" fill="none" stroke="#111" stroke-width="1.2"/></svg>
 <svg style="left:1094px;top:9px" width="11" height="11"><path d="M.5 .5L10.5 10.5M10.5 .5L.5 10.5" stroke="#111" stroke-width="1.2"/></svg>
 <!-- tabs row -->
 <div class="a" style="left:0;top:53px;width:1123px;height:93px;background:#f5f6f7;border-top:1px solid #dadbdc;border-bottom:1px solid #dadbdc"></div>
 <div class="a" style="left:56px;top:30px;width:52px;height:24px;background:#f5f6f7;border:1px solid #dadbdc;border-bottom:none"></div>
 <div class="c rib" style="left:82px;top:34px;letter-spacing:-0.37px">Start</div>
 <div class="c rib" style="left:148px;top:34px;letter-spacing:-0.37px">Freigeben</div>
 <div class="c rib" style="left:223px;top:34px;letter-spacing:-0.16px">Ansicht</div>
 <div class="a" style="left:259px;top:31px;width:1px;height:20px;background:linear-gradient(#e4e4e4,#fff)"></div><div class="a" style="left:367px;top:31px;width:1px;height:20px;background:linear-gradient(#e4e4e4,#fff)"></div>
 <div class="c rib" style="left:312px;top:34px;letter-spacing:-0.3px">Verwalten</div>
 <svg style="left:1086px;top:38px" width="9" height="6" viewBox="0 0 9 6"><path d="M.6 5.2L4.5 1.2L8.4 5.2" fill="none" stroke="#b0b0b0" stroke-width="1.3"/></svg>
 <svg style="left:1105px;top:34px" width="14" height="14" viewBox="0 0 14 14"><circle cx="7" cy="7" r="6.8" fill="#1674d3"/><text x="7" y="11" font-size="11" font-weight="700" fill="#fff" text-anchor="middle" font-family="Liberation Sans,sans-serif">?</text></svg>
 <!-- ribbon: Zwischenablage -->
 <svg style="left:41px;top:66px" width="21" height="21"><use href="#ipin"/></svg>
 <div class="c rib g" style="left:52px;top:96px;letter-spacing:-0.14px">An Schnellzugriff</div><div class="c rib g" style="left:52px;top:109px;letter-spacing:-0.09px">anheften</div>
 <svg style="left:111px;top:63px" width="25" height="28"><use href="#icopy"/></svg>
 <div class="c rib" style="left:124px;top:96px;letter-spacing:-0.32px">Kopieren</div>
 <svg style="left:165px;top:61px" width="21" height="30"><use href="#ipaste"/></svg>
 <div class="c rib g" style="left:176px;top:96px;letter-spacing:-0.17px">Einfügen</div>
 <svg style="left:206px;top:60px" width="14" height="17"><use href="#icut"/></svg><div class="t rib" style="left:224px;top:61px;letter-spacing:-0.35px">Ausschneiden</div>
 <svg style="left:205px;top:87px" width="16" height="9"><use href="#ipath"/></svg><div class="t rib" style="left:224px;top:83px;letter-spacing:-0.22px">Pfad kopieren</div>
 <svg style="left:206px;top:104px" width="14" height="17"><use href="#ilnk"/></svg><div class="t rib g" style="left:224px;top:105px;letter-spacing:0.05px">Verknüpfung einfügen</div>
 <div class="c rib" style="left:175px;top:128px;color:#444;letter-spacing:-0.3px">Zwischenablage</div>
 <div class="sep" style="left:352px;top:56px;height:86px"></div>
 <!-- Organisieren -->
 <svg style="left:379px;top:63px" width="27" height="30"><use href="#imove"/></svg>
 <div class="c rib" style="left:390px;top:96px;letter-spacing:-0.46px">Verschieben</div><div class="c rib" style="left:386px;top:109px;letter-spacing:-0.26px">nach</div>
 <svg style="left:438px;top:61px" width="27" height="30"><use href="#icopyto"/></svg>
 <div class="c rib" style="left:449px;top:96px;letter-spacing:-0.32px">Kopieren</div><div class="c rib" style="left:445px;top:109px;letter-spacing:-0.26px">nach</div>
 <div class="sep" style="left:480px;top:63px;height:56px"></div>
 <svg style="left:494px;top:65px" width="25" height="25"><use href="#idel"/></svg>
 <div class="c rib" style="left:506px;top:96px;letter-spacing:-0.59px">Löschen</div><svg style="left:503px;top:114px" width="7" height="4"><use href="#dd"/></svg>
 <svg style="left:553px;top:64px" width="28" height="26"><use href="#iren"/></svg>
 <div class="c rib" style="left:567px;top:96px;letter-spacing:-0.28px">Umbenennen</div>
 <div class="c rib" style="left:481px;top:128px;color:#444;letter-spacing:-0.2px">Organisieren</div>
 <div class="sep" style="left:611px;top:56px;height:86px"></div>
 <!-- Neu -->
 <svg style="left:626px;top:63px" width="21" height="30"><use href="#inewf"/></svg>
 <div class="c rib" style="left:637px;top:96px;letter-spacing:-0.29px">Neuer</div><div class="c rib" style="left:637px;top:109px;letter-spacing:-0.1px">Ordner</div>
 <svg style="left:660px;top:60px" width="17" height="17"><use href="#inewi"/></svg><div class="t rib" style="left:680px;top:61px;letter-spacing:-0.5px">Neues Element</div><svg style="left:759px;top:67px" width="7" height="4"><use href="#dd"/></svg>
 <svg style="left:660px;top:82px" width="17" height="17"><use href="#ieasy"/></svg><div class="t rib" style="left:680px;top:83px;letter-spacing:-0.14px">Einfacher Zugriff</div><svg style="left:769px;top:89px" width="7" height="4"><use href="#dd"/></svg>
 <div class="c rib" style="left:697px;top:128px;color:#444">Neu</div>
 <div class="sep" style="left:785px;top:56px;height:74px"></div>
 <!-- Oeffnen -->
 <svg style="left:817px;top:63px" width="23" height="29"><use href="#iprops"/></svg>
 <div class="c rib" style="left:829px;top:96px;letter-spacing:-0.27px">Eigenschaften</div><svg style="left:825px;top:114px" width="7" height="4"><use href="#dd"/></svg>
 <svg style="left:870px;top:63px" width="17" height="13"><use href="#iopen"/></svg><div class="t rib" style="left:890px;top:61px">Öffnen</div><svg style="left:931px;top:67px" width="7" height="4"><use href="#dd"/></svg>
 <svg style="left:872px;top:82px" width="15" height="17"><use href="#iedit"/></svg><div class="t rib g" style="left:890px;top:83px;letter-spacing:-0.3px">Bearbeiten</div>
 <svg style="left:870px;top:104px" width="17" height="17"><use href="#ihist"/></svg><div class="t rib g" style="left:890px;top:105px;letter-spacing:-0.23px">Verlauf</div>
 <div class="c rib" style="left:869px;top:128px;color:#444">Öffnen</div>
 <div class="sep" style="left:956px;top:56px;height:86px"></div>
 <!-- Auswaehlen -->
 <svg style="left:964px;top:61px" width="16" height="16"><use href="#iall"/></svg><div class="t rib" style="left:983px;top:61px;letter-spacing:-0.26px">Alles auswählen</div>
 <svg style="left:964px;top:83px" width="16" height="16"><use href="#inone"/></svg><div class="t rib" style="left:983px;top:83px;letter-spacing:-0.21px">Nichts auswählen</div>
 <svg style="left:964px;top:105px" width="16" height="16"><use href="#iinv"/></svg><div class="t rib" style="left:983px;top:105px;letter-spacing:-0.21px">Auswahl umkehren</div>
 <div class="c rib" style="left:1023px;top:128px;color:#444">Auswählen</div>
 <div class="sep" style="left:1092px;top:56px;height:86px"></div>
 <!-- address row (relative to 454,89) -->
 <svg style="left:13px;top:158px" width="13" height="10" viewBox="0 0 13 10"><path d="M12.5 5H1M5 .8L.8 5L5 9.2" fill="none" stroke="#c3c3c3" stroke-width="1.2"/></svg>
 <svg style="left:43px;top:158px" width="13" height="10" viewBox="0 0 13 10"><path d="M.5 5H12M8 .8L12.2 5L8 9.2" fill="none" stroke="#c3c3c3" stroke-width="1.2"/></svg>
 <svg style="left:69px;top:161px" width="7" height="4" viewBox="0 0 7 4"><path d="M.5 .5L3.5 3.5L6.5 .5" fill="none" stroke="#c3c3c3" stroke-width="1"/></svg>
 <svg style="left:87px;top:156px" width="12" height="13" viewBox="0 0 12 13"><path d="M6 12.6V1.2M.8 6.2L6 1L11.2 6.2" fill="none" stroke="#5a5a5a" stroke-width="1.5"/></svg>
 <div class="a" style="left:106px;top:153px;width:791px;height:21px;border:1px solid #d9d9d9;background:#fff"></div>
 <div class="a" style="left:879px;top:154px;width:1px;height:19px;background:#e2e2e2"></div>
 <svg style="left:111px;top:155px" width="13" height="16"><use href="#fold"/></svg>
 <svg style="left:132px;top:159px" width="5" height="8" viewBox="0 0 5 8"><path d="M.8 .8L4 4L.8 7.2" fill="none" stroke="#555" stroke-width="1.3"/></svg>
 <div class="t" style="left:146px;top:155px;letter-spacing:-0.58px">Dieser PC</div>
 <svg style="left:205px;top:159px" width="5" height="8" viewBox="0 0 5 8"><path d="M.8 .8L4 4L.8 7.2" fill="none" stroke="#555" stroke-width="1.3"/></svg>
 <div class="t" style="left:219px;top:155px;letter-spacing:-0.6px">OS (C:)</div>
 <svg style="left:265px;top:159px" width="5" height="8" viewBox="0 0 5 8"><path d="M.8 .8L4 4L.8 7.2" fill="none" stroke="#555" stroke-width="1.3"/></svg>
 <div class="t" style="left:278px;top:155px;letter-spacing:0.01px">Windows</div>
 <svg style="left:337px;top:159px" width="5" height="8" viewBox="0 0 5 8"><path d="M.8 .8L4 4L.8 7.2" fill="none" stroke="#555" stroke-width="1.3"/></svg>
 <div class="t" style="left:351px;top:155px;letter-spacing:-0.67px">SysWOW64</div>
 <svg style="left:867px;top:161px" width="9" height="6"><use href="#chd"/></svg>
 <svg style="left:883px;top:157px" width="12" height="13" viewBox="0 0 12 13"><path d="M9.6 3.6A4.6 4.6 0 1 1 5 2.2" fill="none" stroke="#6a6a6a" stroke-width="1.3"/><path d="M4.4 .2L7.6 2.4L4.4 4.6Z" fill="#6a6a6a"/></svg>
 <div class="a" style="left:909px;top:153px;width:202px;height:21px;border:1px solid #d9d9d9;background:#fff"></div>
 <div class="t" style="left:918px;top:155px;color:#6d6d6d;letter-spacing:-0.23px">"SysWOW64" durchsuchen</div>
 <svg style="left:1090px;top:157px" width="12" height="12" viewBox="0 0 12 12"><circle cx="7.4" cy="4.6" r="3.6" fill="none" stroke="#5a5a5a" stroke-width="1.3"/><path d="M4.8 7.2L.8 11.2" stroke="#5a5a5a" stroke-width="1.6"/></svg>
 <!-- nav pane -->
 <svg style="left:26px;top:192px" width="13" height="16"><use href="#fold"/></svg><div class="t" style="left:45px;top:193px;letter-spacing:-0.34px">OneDrive</div>
 <svg style="left:24px;top:225px" width="16" height="16"><use href="#pc"/></svg><div class="t" style="left:45px;top:225px;letter-spacing:-0.58px">Dieser PC</div>
 <svg style="left:32px;top:249px" width="16" height="16"><use href="#d3"/></svg><div class="t" style="left:53px;top:249px;letter-spacing:-0.12px">3D-Objekte</div>
 <svg style="left:32px;top:273px" width="16" height="16"><use href="#pic"/></svg><div class="t" style="left:53px;top:273px;letter-spacing:-0.07px">Bilder</div>
 <svg style="left:32px;top:297px" width="16" height="16"><use href="#desk"/></svg><div class="t" style="left:53px;top:297px;letter-spacing:-0.25px">Desktop</div>
 <svg style="left:32px;top:321px" width="16" height="16"><use href="#doc"/></svg><div class="t" style="left:53px;top:321px;letter-spacing:0.01px">Dokumente</div>
 <svg style="left:32px;top:345px" width="16" height="16"><use href="#dl"/></svg><div class="t" style="left:53px;top:345px;letter-spacing:-0.1px">Downloads</div>
 <div class="a" style="left:140px;top:181px;width:16px;height:176px;background:#f0f0f0"></div>
 <div class="a" style="left:140px;top:254px;width:16px;height:41px;background:#cdcdcd"></div>
 <svg style="left:143px;top:187px" width="10" height="6"><use href="#chu"/></svg>
 <svg style="left:143px;top:346px" width="10" height="6"><use href="#chd"/></svg>
 <div class="a" style="left:158px;top:181px;width:1px;height:176px;background:#f0f0f0"></div>
 <!-- file list header -->
 <svg style="left:297px;top:181px" width="9" height="5" viewBox="0 0 9 5"><path d="M.6 4.4L4.5 .8L8.4 4.4" fill="none" stroke="#666" stroke-width="1.2"/></svg>
 <div class="t hd" style="left:177px;top:186px;letter-spacing:-0.25px">Name</div>
 <div class="sep" style="left:431px;top:181px;height:25px"></div><div class="t hd" style="left:438px;top:186px;letter-spacing:0.08px">Änderungsdatum</div>
 <div class="sep" style="left:551px;top:181px;height:25px"></div><div class="t hd" style="left:558px;top:186px;letter-spacing:-0.28px">Typ</div>
 <div class="sep" style="left:671px;top:181px;height:25px"></div><div class="t hd" style="left:678px;top:186px;letter-spacing:-0.65px">Größe</div>
 <div class="sep" style="left:751px;top:181px;height:25px"></div>
 <svg width="0" height="0"><defs>
 <symbol id="fdll" viewBox="0 0 12 15"><path d="M.5 .5H8L11.5 4V14.5H.5Z" fill="#fff" stroke="#8f8f8f"/><path d="M8 .5V4H11.5" fill="#f0f0f0" stroke="#8f8f8f" stroke-width=".8"/><circle cx="5" cy="7.4" r="2.5" fill="#e4e4e4" stroke="#8a8a8a" stroke-width=".9"/><circle cx="7.6" cy="10" r="1.9" fill="#cfe6f8" stroke="#6fa3cf" stroke-width=".8"/></symbol>
 <symbol id="fblank" viewBox="0 0 12 15"><path d="M.5 .5H8L11.5 4V14.5H.5Z" fill="#fff" stroke="#8f8f8f"/><path d="M8 .5V4H11.5" fill="#f0f0f0" stroke="#8f8f8f" stroke-width=".8"/></symbol>
 </defs></svg>
 <!-- rows -->
 <div class="a" style="left:174px;top:290px;width:574px;height:22px;background:#cce8ff;border:1px solid #99d1ff"></div>
 <svg style="left:180px;top:208px" width="12" height="15"><use href="#fdll"/></svg><div class="t" style="left:198px;top:209px;letter-spacing:-0.19px">MSFlacEncoder.dll</div><div class="t dt" style="left:438px;top:209px;letter-spacing:-0.62px">29.09.2017 15:41</div><div class="t dt" style="left:558px;top:209px;letter-spacing:-0.05px">Anwendungserwe...</div><div class="r dt" style="left:644px;width:100px;top:209px;letter-spacing:-0.7px">215 KB</div>
 <svg style="left:180px;top:229px" width="12" height="15"><use href="#fdll"/></svg><div class="t" style="left:198px;top:230px;letter-spacing:0.2px">msftedit.dll</div><div class="t dt" style="left:438px;top:230px;letter-spacing:-0.62px">29.09.2017 15:42</div><div class="t dt" style="left:558px;top:230px;letter-spacing:-0.05px">Anwendungserwe...</div><div class="r dt" style="left:644px;width:100px;top:230px;letter-spacing:-0.7px">2.697 KB</div>
 <svg style="left:180px;top:250px" width="12" height="15"><use href="#fblank"/></svg><div class="t" style="left:198px;top:251px;letter-spacing:-0.11px">msg711.acm</div><div class="t dt" style="left:438px;top:251px;letter-spacing:-0.62px">29.09.2017 15:42</div><div class="t dt" style="left:558px;top:251px;letter-spacing:0.03px">ACM-Datei</div><div class="r dt" style="left:644px;width:100px;top:251px;letter-spacing:-0.7px">23 KB</div>
 <svg style="left:180px;top:271px" width="12" height="15"><use href="#fblank"/></svg><div class="t" style="left:198px;top:272px;letter-spacing:-0.12px">msgsm32.acm</div><div class="t dt" style="left:438px;top:272px;letter-spacing:-0.62px">29.09.2017 15:42</div><div class="t dt" style="left:558px;top:272px;letter-spacing:0.03px">ACM-Datei</div><div class="r dt" style="left:644px;width:100px;top:272px;letter-spacing:-0.7px">36 KB</div>
 <svg style="left:178px;top:294px" width="16" height="13" viewBox="0 0 16 13"><rect x=".5" y=".5" width="15" height="12" fill="#fff" stroke="#111"/><rect x="1" y="1" width="14" height="2.6" fill="#1b22a8"/><path d="M8.6 2.3H9.8M10.6 2.3H11.8M12.6 2.3H13.8" stroke="#fff" stroke-width="1"/><rect x=".5" y="11.4" width="15" height="1.2" fill="#111"/></svg><div class="t" style="left:198px;top:293px;letter-spacing:-0.04px">mshta</div><div class="t dt" style="left:438px;top:293px;letter-spacing:-0.62px">29.09.2017 15:41</div><div class="t dt" style="left:558px;top:293px;letter-spacing:0.18px">Anwendung</div><div class="r dt" style="left:644px;width:100px;top:293px;letter-spacing:-0.7px">13 KB</div>
 <svg style="left:180px;top:313px" width="12" height="15"><use href="#fdll"/></svg><div class="t" style="left:198px;top:314px;letter-spacing:0.27px">mshtml.dll</div><div class="t dt" style="left:438px;top:314px;letter-spacing:-0.62px">10.02.2018 05:41</div><div class="t dt" style="left:558px;top:314px;letter-spacing:-0.05px">Anwendungserwe...</div><div class="r dt" style="left:644px;width:100px;top:314px;letter-spacing:-0.7px">18.899 KB</div>
 <svg style="left:180px;top:334px" width="12" height="15"><use href="#fblank"/></svg><div class="t" style="left:198px;top:335px;letter-spacing:0.28px">mshtml.tlb</div><div class="t dt" style="left:438px;top:335px;letter-spacing:-0.62px">29.09.2017 15:41</div><div class="t dt" style="left:558px;top:335px;letter-spacing:-0.23px">TLB-Datei</div><div class="r dt" style="left:644px;width:100px;top:335px;letter-spacing:-0.7px">2.691 KB</div>
 <div class="a" style="left:180px;top:355px;width:9px;height:1px;background:#9a9a9a"></div>
 <!-- list scrollbar -->
 <div class="a" style="left:1107px;top:181px;width:16px;height:176px;background:#f0f0f0"></div>
 <div class="a" style="left:1107px;top:266px;width:16px;height:17px;background:#cdcdcd"></div>
 <svg style="left:1110px;top:187px" width="10" height="6"><use href="#chu"/></svg>
 <svg style="left:1110px;top:346px" width="10" height="6"><use href="#chd"/></svg>
 <!-- status -->
 <div class="a" style="left:0;top:357px;width:1123px;height:23px;background:#fff"></div>
 <div class="t st" style="left:14px;top:361px;letter-spacing:-0.36px">3.022 Elemente</div><div class="sep" style="left:103px;top:361px;height:16px"></div>
 <div class="t st" style="left:114px;top:361px;letter-spacing:-0.28px">1 Element ausgewählt (13,0 KB)</div><div class="sep" style="left:288px;top:361px;height:16px"></div>
 <svg style="left:1075px;top:357px" width="22" height="23"><use href="#vdet"/></svg>
 <svg style="left:1101px;top:362px" width="14" height="12"><use href="#vbig"/></svg>
</div>
<!-- desktop icon -->
<svg style="left:1400px;top:521px" width="48" height="48" viewBox="0 0 48 48"><path d="M5.6 7.5Q8.9 7.4 11.9 4.4Q14.8 1.4 17.1 5.8Q19.4 10.1 21.1 11.2Q22.8 12.3 24.0 7.7Q25.2 3.0 27.1 2.3Q29.0 1.6 31.1 3.7Q33.2 5.8 31.4 11.3Q29.6 16.8 32.6 18.5Q35.6 20.2 39.3 20.2Q43.0 20.2 45.5 23.2Q48.0 26.2 46.4 28.4Q44.8 30.6 41.4 30.6Q38.0 30.6 37.6 32.9Q37.2 35.1 39.7 35.8Q42.2 36.4 44.9 37.7Q47.5 39.0 45.5 40.9Q43.6 42.8 39.8 41.2Q36.0 39.6 34.4 36.5Q32.8 33.4 31.3 37.5Q29.8 41.6 26.6 44.8Q23.3 48.0 20.4 45.9Q17.4 43.8 18.7 38.0Q20.0 32.3 17.8 30.9Q15.6 29.6 9.8 29.8Q4.0 30.0 2.3 27.3Q0.6 24.6 2.9 22.8Q5.2 21.0 9.2 20.7Q13.3 20.4 12.8 19.1Q12.2 17.9 9.5 16.9Q6.8 15.9 5.2 13.6Q3.6 11.2 2.9 9.4Q2.2 7.6 5.6 7.5Z" fill="#a00606"/><ellipse cx="12.600" cy="12.600" rx="6.200" ry="5.200" transform="rotate(-28 12.600 12.600)" fill="#e2b4b4" opacity=".8"/><circle cx="13.300" cy="8.600" r="2.300" fill="#fff"/><circle cx="13.600" cy="8.600" r="1" fill="#222"/><path d="M7.400 12.800L10.600 10.400L10.800 13.800Z" fill="#fff"/><text x="25.300" y="32" font-size="11.500" fill="#ffe94a" text-anchor="middle" font-family="Liberation Sans,sans-serif">64</text></svg>
<div class="c" style="left:1424px;top:573px;color:#fff;text-shadow:0 1px 2px #000,0 0 3px #000;letter-spacing:-0.14px">Neue Bitmap</div>
<!-- taskbar -->
<div class="a" style="left:0;top:860px;width:1600px;height:40px;background:rgba(8,8,8,.88)">
 <svg style="left:16px;top:12px" width="16" height="16" viewBox="0 0 16 16"><path d="M0 2.300L6.500 1.400V7.600H0ZM7.300 1.300L16 0V7.600H7.300ZM0 8.400H6.500V14.600L0 13.700ZM7.300 8.400H16V16L7.300 14.700Z" fill="#fff"/></svg>
 <div class="a" style="left:48px;top:0;width:344px;height:40px;background:#f2f2f2"></div>
 <svg style="left:57px;top:10px" width="21" height="21" viewBox="0 0 21 21"><circle cx="10.500" cy="10.500" r="8.300" fill="none" stroke="#111" stroke-width="2.600"/></svg>
 <div class="t" style="left:88px;top:10px;font-size:15px;line-height:20px;height:20px;color:#2b2b2b;letter-spacing:-0.16px">Zur Suche Text hier eingeben</div>
 <svg style="left:366px;top:11px" width="11" height="18" viewBox="0 0 11 18"><rect x="3" y=".6" width="5" height="10" rx="2.500" fill="none" stroke="#333" stroke-width="1.100"/><path d="M.8 8V9.500Q.8 13.500 5.500 13.500Q10.200 13.500 10.200 9.500V8M5.500 13.500V16.800M2.500 17H8.500" fill="none" stroke="#333" stroke-width="1.100"/></svg>
 <!-- task view -->
 <svg style="left:406px;top:11px" width="21" height="17" viewBox="0 0 21 17"><rect x="5" y="1" width="11" height="15" fill="none" stroke="#fff" stroke-width="1.300"/><path d="M3 3H1V14H3M18 3H20V14H18" fill="none" stroke="#fff" stroke-width="1.300"/></svg>
 <!-- explorer (active) -->
 <div class="a" style="left:443px;top:0;width:45px;height:40px;background:#2b2b2b"></div><div class="a" style="left:488px;top:0;width:3px;height:40px;background:#1e1e1e"></div>
 <div class="a" style="left:443px;top:38px;width:45px;height:2px;background:#f4a6ad"></div><div class="a" style="left:489px;top:38px;width:2px;height:2px;background:#f4a6ad"></div>
 <svg style="left:455px;top:10px" width="24" height="20" viewBox="0 0 24 20"><path d="M1 1.500H8.500L10.500 3.500H22.500V6H1Z" fill="#e8b93c"/><rect x="1" y="4.500" width="22" height="14" rx=".8" fill="#fcd667"/><rect x="1" y="4.500" width="22" height="2.200" fill="#ffe28a"/><path d="M5.500 18.500V11.800H18.500V18.500H15V14.800H9V18.500Z" fill="#29a3ef"/></svg>
 <!-- task manager -->
 <div class="a" style="left:496px;top:38px;width:40px;height:2px;background:#f4a6ad"></div>
 <svg style="left:504px;top:9px" width="24" height="23" viewBox="0 0 24 23"><rect x="4.500" y="1.500" width="18" height="13.500" rx="1" fill="#d9e9f3" stroke="#9aa5ad" stroke-width="1.200"/><path d="M6 11L8.500 6L10.500 11.500L12.500 4.500L14.500 11L16.500 8L18.500 11.500L21 9" fill="none" stroke="#2a7fc7" stroke-width="1.100"/><path d="M10 15.500H17L18.500 19H8.500Z" fill="#b9c2c9"/><ellipse cx="13.500" cy="20" rx="7" ry="2" fill="#cfd6db"/><rect x="1" y="5" width="3.500" height="13" rx=".6" fill="#c6ccd1" stroke="#8d969d" stroke-width=".8"/><rect x="2" y="6.500" width="1.500" height="2" fill="#3bc24a"/></svg>
 <!-- teamspeak -->
 <svg style="left:552px;top:8px" width="25" height="25" viewBox="0 0 25 25"><path d="M8 2Q20 0 23.500 11Q25 21 13 24Q6 24.500 4.500 21Q14 22 18.500 16Q21.500 9 15 5Q11 3 8 2Z" fill="#3c5f93"/><path d="M9.500 3.500Q18 5 18.500 12Q18 19 10 21Q13 16 12.500 12Q12 7 9.500 3.500Z" fill="#8fa6c6"/><path d="M10 2.500Q7 9 8 15" fill="none" stroke="#56759f" stroke-width="1.600"/><circle cx="6.500" cy="14.500" r="2.800" fill="#3a9a3a"/><circle cx="5.800" cy="13.800" r="1" fill="#9be09b"/></svg>
 <!-- control panel -->
 <svg style="left:603px;top:12px" width="22" height="16" viewBox="0 0 22 16"><rect width="22" height="16" rx=".8" fill="#2e9be8"/><rect x="1" y="1" width="20" height="14" fill="#49b0f2"/><circle cx="7" cy="6.500" r="3.600" fill="#f3f8fc"/><path d="M7 6.500V2.900A3.600 3.600 0 0 1 10.600 6.500Z" fill="#f0a030"/><path d="M13 3.500H19M13 6.500H19M13 9.500H19" stroke="#e9f5fd" stroke-width="1.600"/><path d="M3 12.500H12" stroke="#f0c040" stroke-width="1.400"/><path d="M13 12.500H19" stroke="#2a6fb5" stroke-width="1.400"/></svg>
 <!-- steam -->
 <svg style="left:651px;top:8px" width="24" height="24" viewBox="0 0 24 24"><defs><linearGradient id="stg" x1="0" y1="0" x2="0" y2="1"><stop offset="0" stop-color="#10233f"/><stop offset="1" stop-color="#1b6a9c"/></linearGradient></defs><circle cx="12" cy="12" r="11.500" fill="url(#stg)"/><circle cx="15.600" cy="9" r="3.300" fill="none" stroke="#e8eef4" stroke-width="1.500"/><circle cx="15.600" cy="9" r="1.500" fill="#e8eef4"/><path d="M.8 13.200L7 15.800M12.600 11.400L9 15.600" stroke="#e8eef4" stroke-width="2.600" stroke-linecap="round"/><circle cx="8" cy="16.600" r="2.500" fill="#e8eef4"/></svg>
 <!-- firefox -->
 <div class="a" style="left:692px;top:38px;width:40px;height:2px;background:#f4a6ad"></div>
 <svg style="left:699.800px;top:7px" width="23.500" height="24.500"><use href="#ffx"/></svg>
 <!-- installer -->
 <div class="a" style="left:741px;top:38px;width:41px;height:2px;background:#f4a6ad"></div>
 <svg style="left:749px;top:6px" width="24" height="28" viewBox="0 0 24 28"><rect x="9.500" y=".8" width="13" height="10.500" fill="#d7dde2" stroke="#8a939b" stroke-width=".8"/><rect x="11" y="2.200" width="10" height="7.500" fill="#22a8ee"/><path d="M11 9.700L21 2.200V9.700Z" fill="#4fc3f7"/><rect x="12.500" y="11.500" width="7" height="2" fill="#aab2b9"/><rect x="1.500" y="9" width="8" height="16" fill="#c9cfd4" stroke="#8a939b" stroke-width=".8"/><rect x="2.500" y="10.500" width="6" height="1.500" fill="#8b949c"/><circle cx="14.500" cy="21" r="6" fill="#d9dfe3" stroke="#8f989f" stroke-width=".8"/><circle cx="14.500" cy="21" r="1.800" fill="#6f7880"/><path d="M14.500 21L19.500 18A6 6 0 0 1 20.300 22.500Z" fill="#7fd36b"/><path d="M14.500 21L9.500 24A6 6 0 0 1 8.700 19.500Z" fill="#6fb7ef"/></svg>
 <!-- tray -->
 <svg style="left:1391px;top:16px" width="12" height="8" viewBox="0 0 12 8"><path d="M.8 7L6 1.600L11.200 7" fill="none" stroke="#fff" stroke-width="1.200"/></svg>
 <svg style="left:1412px;top:14px" width="17" height="12" viewBox="0 0 17 12"><rect x="5" y="3.200" width="10.500" height="7.300" fill="none" stroke="#fff" stroke-width="1.100"/><rect x="6.500" y="4.700" width="7.500" height="4.300" fill="#fff"/><rect x="15.500" y="5.500" width="1.300" height="2.800" fill="#fff"/><path d="M1.600 .5V2.500M4 .5V2.500M.8 2.500H4.800V4.500Q4.800 6 2.800 6Q.8 6 .8 4.500ZM2.800 6V10.500H5" fill="none" stroke="#fff" stroke-width="1"/></svg>
 <svg style="left:1439px;top:14px" width="14" height="13" viewBox="0 0 14 13"><circle cx="11.500" cy="11.300" r="1.400" fill="#fff"/><path d="M7.500 12.500A4.500 4.500 0 0 1 12.500 7" fill="none" stroke="#fff" stroke-width="1.100"/><path d="M4.200 12.500A7.800 7.800 0 0 1 12.500 3.800" fill="none" stroke="#d0d0d0" stroke-width="1.100"/><path d="M.9 12.500A11 11 0 0 1 12.500 .7" fill="none" stroke="#bdbdbd" stroke-width="1.100"/></svg>
 <svg style="left:1460px;top:13px" width="18" height="14" viewBox="0 0 18 14"><path d="M.8 4.800H3.500L7 1.300V12.700L3.500 9.200H.8Z" fill="none" stroke="#fff" stroke-width="1.100"/><path d="M9.300 4.800Q10.600 7 9.300 9.200" fill="none" stroke="#fff" stroke-width="1"/><path d="M11.500 3Q13.800 7 11.500 11" fill="none" stroke="#c9c9c9" stroke-width="1"/><path d="M13.800 1.300Q17 7 13.800 12.700" fill="none" stroke="#8f8f8f" stroke-width="1"/></svg>
 <div class="c" style="left:1513px;top:3px;color:#fff;letter-spacing:-0.7px">01:01</div>
 <div class="c" style="left:1513px;top:21px;color:#fff;letter-spacing:-0.67px">11.03.2018</div>
 <svg style="left:1559px;top:12px" width="16" height="17" viewBox="0 0 16 17"><path d="M.700 .700H15.300V12H10.200L8 14.300L5.800 12H.7Z" fill="none" stroke="#fff" stroke-width="1.200"/></svg>
 <div class="a" style="left:1595px;top:0;width:1px;height:40px;background:#5a5a5a"></div>
</div>
</body></html>
